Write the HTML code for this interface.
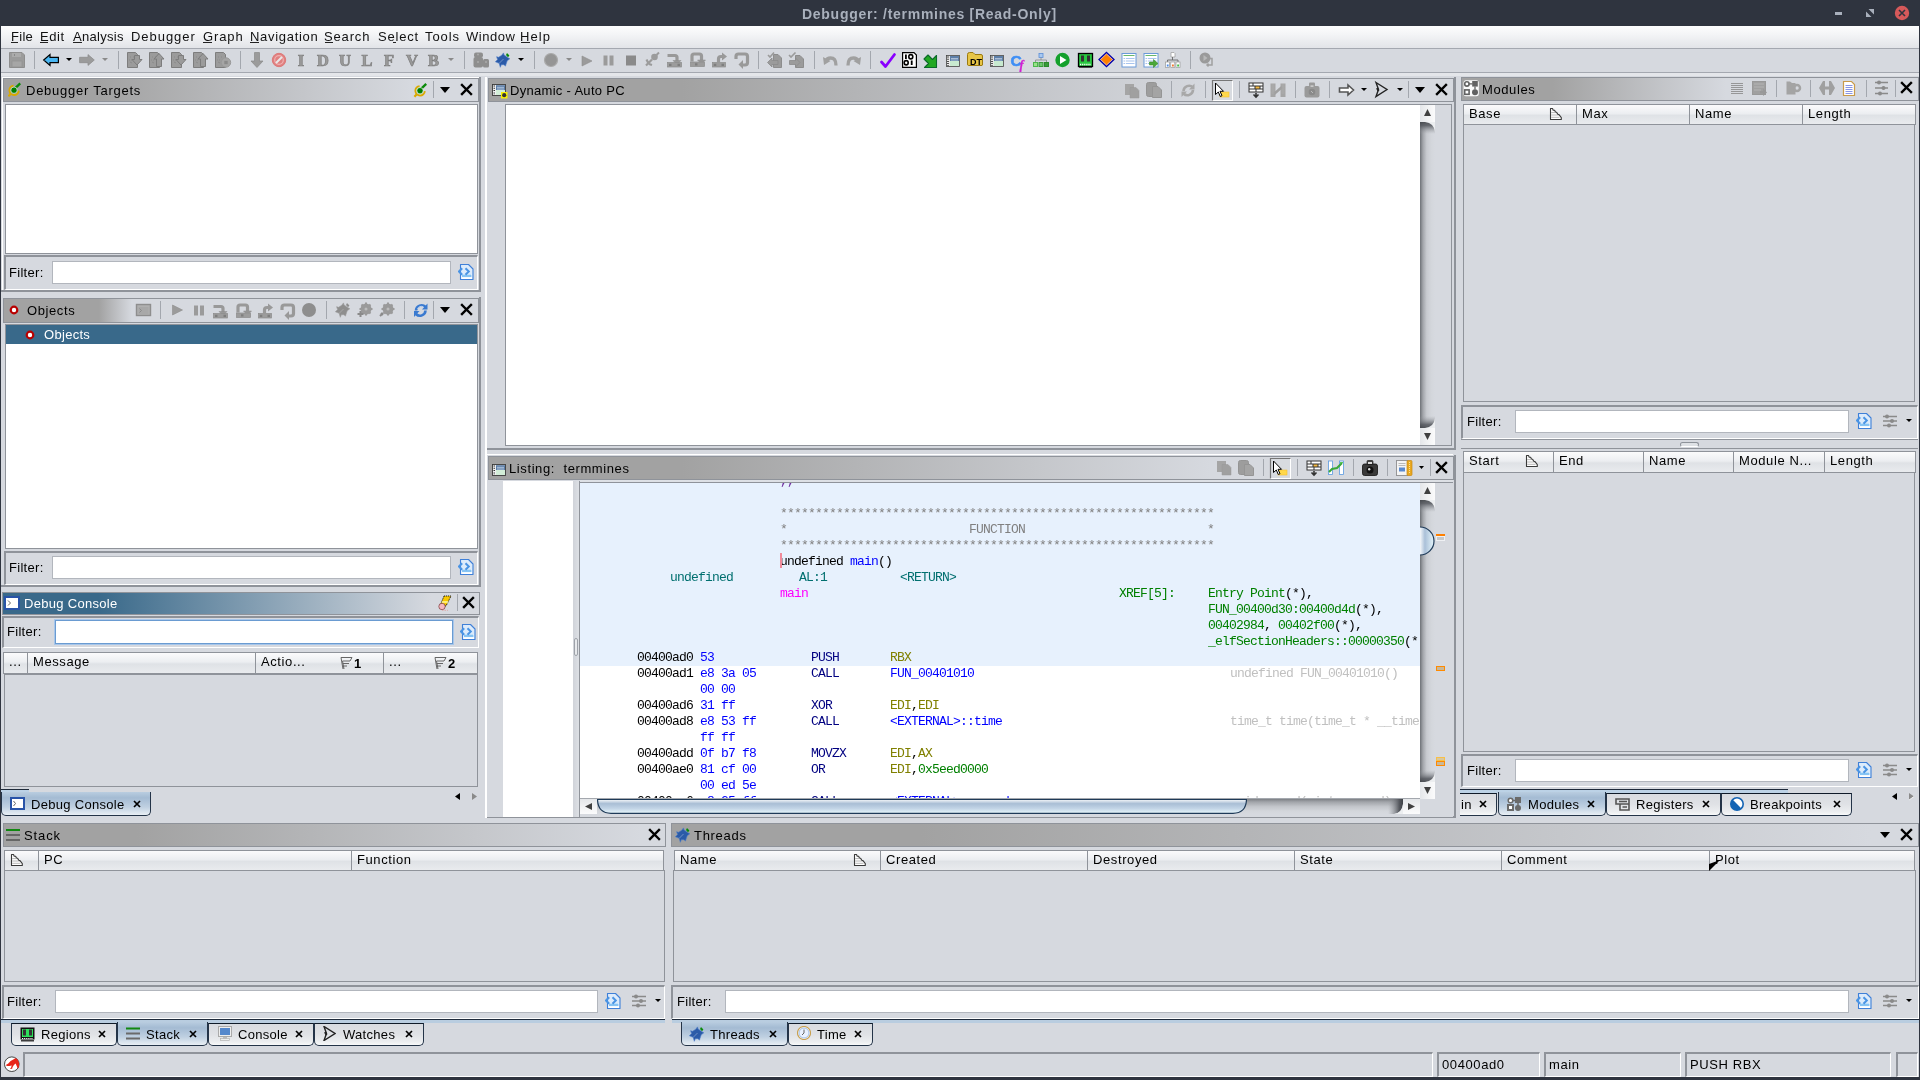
<!DOCTYPE html><html><head><meta charset="utf-8"><style>
html,body{margin:0;padding:0;}
body{width:1920px;height:1080px;overflow:hidden;position:relative;background:#d6d9df;font-family:"Liberation Sans",sans-serif;}
div,svg{position:absolute;}
.t{white-space:pre;line-height:1;will-change:transform;}
</style></head><body>
<div style="left:0px;top:0px;width:1920px;height:26px;background:#2f343f;"></div>
<div class="t" style="left:802px;top:6.65px;font-size:14px;color:#a9b0bc;letter-spacing:0.72px;font-family:'Liberation Sans', sans-serif;font-weight:bold;">Debugger: /termmines [Read-Only]</div>
<div style="left:1835px;top:12px;width:7px;height:3px;background:#a9b0bc;"></div>
<svg style="left:1866px;top:9px;" width="8" height="8" viewBox="0 0 8 8"><path d="M0 8V2.5L5.5 8Z M8 0V5.5L2.5 0Z" fill="#a9b0bc"/></svg>
<svg style="left:1894px;top:5px;" width="16" height="16" viewBox="0 0 16 16"><circle cx="8" cy="8" r="7.2" fill="#d6595a"/><path d="M5 5L11 11M11 5L5 11" stroke="#2f343f" stroke-width="1.6"/></svg>
<div style="left:0px;top:26px;width:1px;height:1054px;background:#2f343f;"></div>
<div style="left:1919px;top:26px;width:1px;height:1054px;background:#2f343f;"></div>
<div style="left:0px;top:1077px;width:1920px;height:3px;background:#2f343f;"></div>
<div style="left:1px;top:26px;width:1918px;height:22px;background:linear-gradient(to bottom,#fdfdfd 0%,#f3f4f6 40%,#e2e4e8 100%);"></div>
<div style="left:1px;top:48px;width:1918px;height:1px;background:#a4a8b0;"></div>
<div class="t" style="left:11px;top:29.70px;font-size:13px;color:#111;letter-spacing:0.3px;font-family:'Liberation Sans', sans-serif;">File</div>
<div class="t" style="left:40px;top:29.70px;font-size:13px;color:#111;letter-spacing:0.6px;font-family:'Liberation Sans', sans-serif;">Edit</div>
<div class="t" style="left:73px;top:29.70px;font-size:13px;color:#111;letter-spacing:0.3px;font-family:'Liberation Sans', sans-serif;">Analysis</div>
<div class="t" style="left:131px;top:29.70px;font-size:13px;color:#111;letter-spacing:0.95px;font-family:'Liberation Sans', sans-serif;">Debugger</div>
<div class="t" style="left:203px;top:29.70px;font-size:13px;color:#111;letter-spacing:0.9px;font-family:'Liberation Sans', sans-serif;">Graph</div>
<div class="t" style="left:249.5px;top:29.70px;font-size:13px;color:#111;letter-spacing:0.7px;font-family:'Liberation Sans', sans-serif;">Navigation</div>
<div class="t" style="left:324px;top:29.70px;font-size:13px;color:#111;letter-spacing:0.85px;font-family:'Liberation Sans', sans-serif;">Search</div>
<div class="t" style="left:377.5px;top:29.70px;font-size:13px;color:#111;letter-spacing:0.8px;font-family:'Liberation Sans', sans-serif;">Select</div>
<div class="t" style="left:425px;top:29.70px;font-size:13px;color:#111;letter-spacing:0.9px;font-family:'Liberation Sans', sans-serif;">Tools</div>
<div class="t" style="left:466px;top:29.70px;font-size:13px;color:#111;letter-spacing:0.55px;font-family:'Liberation Sans', sans-serif;">Window</div>
<div class="t" style="left:520px;top:29.70px;font-size:13px;color:#111;letter-spacing:1.1px;font-family:'Liberation Sans', sans-serif;">Help</div>
<div style="left:11px;top:42px;width:7px;height:1px;background:#222;"></div>
<div style="left:40px;top:42px;width:8px;height:1px;background:#222;"></div>
<div style="left:73px;top:42px;width:9px;height:1px;background:#222;"></div>
<div style="left:203px;top:42px;width:9px;height:1px;background:#222;"></div>
<div style="left:250px;top:42px;width:9px;height:1px;background:#222;"></div>
<div style="left:325px;top:42px;width:8px;height:1px;background:#222;"></div>
<div style="left:393px;top:42px;width:3px;height:1px;background:#222;"></div>
<div style="left:521px;top:42px;width:9px;height:1px;background:#222;"></div>
<div style="left:1px;top:72px;width:1918px;height:1px;background:#a4a8b0;"></div>
<div style="left:1px;top:73px;width:1918px;height:3px;background:#e4e6ea;"></div>
<svg style="left:0px;top:48px" width="1300" height="24" viewBox="0 0 1300 24"><g transform="translate(9,4)"><path d="M0.5 0.5H13L15.5 3V15.5H0.5Z" fill="#9b9b9b" stroke="#8e8e8e"/><rect x="3" y="1" width="9" height="4" fill="#ababab"/><rect x="5" y="2" width="1" height="2" fill="#888"/><rect x="3" y="9" width="10" height="6" fill="#a6a6a6" stroke="#8e8e8e" stroke-width="0.6"/></g><rect x="34" y="3" width="1" height="18" fill="#a3a7ae"/><g transform="translate(43,6)"><path d="M0.7 6L7 0.6V3.3H15.4V8.7H7V11.4Z" fill="#4ab6f2" stroke="#000" stroke-width="1.2" stroke-linejoin="miter"/></g><path d="M66 10H72L69 13Z" fill="#000"/><g transform="translate(79,6)"><path d="M15.3 6L9 0.6V3.3H0.6V8.7H9V11.4Z" fill="#9b9b9b" stroke="#8e8e8e" stroke-width="0.8"/></g><path d="M102 10H108L105 13Z" fill="#8a8a8a"/><rect x="118" y="3" width="1" height="18" fill="#a3a7ae"/><g transform="translate(127,4)"><path d="M0.5 0.5H8.5L10.5 2.5V15.5H0.5Z" fill="#9b9b9b" stroke="#7d7d7d"/><path d="M3 5H4M6 5H7M2 8H3M4 8H5M3 10L5 11" stroke="#888" stroke-width="0.8"/><path d="M7.5 3.5H12.5V7.5H15L10 13L5 7.5H7.5Z" fill="#9b9b9b" stroke="#7d7d7d"/></g><g transform="translate(149,4)"><path d="M0.5 0.5H8.5L10.5 2.5V15.5H0.5Z" fill="#9b9b9b" stroke="#7d7d7d"/><path d="M3 5H4M6 5H7M2 8H3M4 8H5M3 10L5 11" stroke="#888" stroke-width="0.8"/><path d="M10 1.5L15 7H12.5V14.5H7.5V7H5Z" fill="#9b9b9b" stroke="#7d7d7d"/></g><g transform="translate(171,4)"><path d="M0.5 0.5H8.5L10.5 2.5V15.5H0.5Z" fill="#9b9b9b" stroke="#7d7d7d"/><path d="M3 5H4M6 5H7M2 8H3M4 8H5M3 10L5 11" stroke="#888" stroke-width="0.8"/><path d="M7.5 3.5H12.5V7.5H15L10 13L5 7.5H7.5Z" fill="#9b9b9b" stroke="#7d7d7d"/></g><g transform="translate(193,4)"><path d="M0.5 0.5H8.5L10.5 2.5V15.5H0.5Z" fill="#9b9b9b" stroke="#7d7d7d"/><path d="M3 5H4M6 5H7M2 8H3M4 8H5M3 10L5 11" stroke="#888" stroke-width="0.8"/><path d="M10 1.5L15 7H12.5V14.5H7.5V7H5Z" fill="#9b9b9b" stroke="#7d7d7d"/></g><g transform="translate(215,4)"><path d="M0.5 0.5H8.5L10.5 2.5V15.5H0.5Z" fill="#9b9b9b" stroke="#7d7d7d"/><path d="M3 5H4M6 5H7M2 8H3M4 8H5M3 10L5 11" stroke="#888" stroke-width="0.8"/><circle cx="11" cy="10.5" r="4.7" fill="#a5a5a5" stroke="#999"/><rect x="9.3" y="8.8" width="3.4" height="3.4" fill="#8a8a8a"/></g><rect x="240" y="3" width="1" height="18" fill="#a3a7ae"/><g transform="translate(251,4)"><path d="M3.5 0.5H8.5V9H12L6 15.5L0 9H3.5Z" fill="#9b9b9b" stroke="#8a8a8a" stroke-width="0.7"/></g><g transform="translate(272,5)"><circle cx="7" cy="7" r="6.7" fill="#e08080" stroke="#d77"/><circle cx="7" cy="7" r="4.3" fill="none" stroke="#f0b0b0" stroke-width="1.2"/><path d="M4 10L10 4" stroke="#e8e8e8" stroke-width="2"/></g><g transform="translate(295,4)"><text x="6.0" y="13.8" text-anchor="middle" font-family="Liberation Serif" font-weight="bold" font-size="16.5" fill="#9a9a9a" stroke="#7f7f7f" stroke-width="0.7">I</text></g><g transform="translate(315,4)"><text x="8.0" y="13.8" text-anchor="middle" font-family="Liberation Serif" font-weight="bold" font-size="16.5" fill="#9a9a9a" stroke="#7f7f7f" stroke-width="0.7">D</text></g><g transform="translate(337,4)"><text x="8.0" y="13.8" text-anchor="middle" font-family="Liberation Serif" font-weight="bold" font-size="16.5" fill="#9a9a9a" stroke="#7f7f7f" stroke-width="0.7">U</text></g><g transform="translate(361,4)"><text x="6.0" y="13.8" text-anchor="middle" font-family="Liberation Serif" font-weight="bold" font-size="16.5" fill="#9a9a9a" stroke="#7f7f7f" stroke-width="0.7">L</text></g><g transform="translate(383,4)"><text x="6.0" y="13.8" text-anchor="middle" font-family="Liberation Serif" font-weight="bold" font-size="16.5" fill="#9a9a9a" stroke="#7f7f7f" stroke-width="0.7">F</text></g><g transform="translate(404,4)"><text x="8.0" y="13.8" text-anchor="middle" font-family="Liberation Serif" font-weight="bold" font-size="16.5" fill="#9a9a9a" stroke="#7f7f7f" stroke-width="0.7">V</text></g><g transform="translate(426,4)"><text x="7.5" y="13.8" text-anchor="middle" font-family="Liberation Serif" font-weight="bold" font-size="16.5" fill="#9a9a9a" stroke="#7f7f7f" stroke-width="0.7">B</text></g><path d="M448 10H454L451 13Z" fill="#8a8a8a"/><rect x="464" y="3" width="1" height="18" fill="#a3a7ae"/><g transform="translate(473,4)"><rect x="1" y="0.5" width="9" height="5" rx="2" fill="#8e8e8e"/><rect x="0.5" y="5" width="9.5" height="10.5" rx="2" fill="#8e8e8e"/><rect x="10" y="7" width="6" height="8.5" rx="1.5" fill="#8e8e8e"/><circle cx="5" cy="2.5" r="1" fill="#aaa"/><circle cx="5" cy="10" r="1" fill="#aaa"/><circle cx="13" cy="10" r="1" fill="#aaa"/></g><g transform="translate(495,4)"><path d="M1.6 4.7L3.6 5.3L6.7 3.3L8.5 0.9L8.9 2.7L12.2 5.3L14.8 6.8L12.2 8.8L11 12.3L10.5 14.1L8.9 12.7L6.3 12.7L5.3 15.3L4.2 11.3L0.4 9.8L2.6 7.6Z" fill="#2b5ba8" stroke="#4a7ac8" stroke-width="0.6" stroke-linejoin="round"/><path d="M4.5 11L8.5 7" stroke="#d8e4f4" stroke-width="0.7" stroke-dasharray="0.8 0.8"/><path d="M12 1.1L14.4 3.5L13 5.3L11 2.9Z" fill="#0a8a0a"/></g><path d="M518 10H524L521 13Z" fill="#000"/><rect x="534" y="3" width="1" height="18" fill="#a3a7ae"/><g transform="translate(544,5)"><circle cx="7" cy="7" r="6.5" fill="#959595" stroke="#aaa" stroke-width="1.2"/></g><path d="M566 10H572L569 13Z" fill="#8a8a8a"/><g transform="translate(582,6)"><path d="M0 2L10 7L0 12Z" fill="#9b9b9b" stroke="#8d8d8d" stroke-width="0.6"/></g><g transform="translate(603,7)"><rect x="0.5" y="0.5" width="4" height="10" fill="#9b9b9b"/><rect x="6.5" y="0.5" width="4" height="10" fill="#9b9b9b"/></g><g transform="translate(625.5,7)"><rect x="0.5" y="0.5" width="10" height="10" fill="#8a8a8a"/></g><g transform="translate(645,4)"><circle cx="9.5" cy="5" r="3.3" fill="#9b9b9b"/><path d="M11.5 3L14 0.5" stroke="#9b9b9b" stroke-width="2"/><path d="M7 7.5L1 13.5M3 10.5L1.5 7.5M4 12L7 13" stroke="#9b9b9b" stroke-width="2.2"/></g><g transform="translate(667,5)"><path d="M0.5 2.5H8Q10 2.5 10 4.5V8" stroke="#999" stroke-width="3.2" fill="none"/><path d="M6 7.5H14L10 11.5Z" fill="#999" stroke="#8a8a8a" stroke-width="0.5"/><rect x="0.5" y="9.5" width="14" height="4.5" fill="#9c9c9c" stroke="#8c8c8c" stroke-width="0.7"/><rect x="2" y="10.8" width="2.5" height="2.2" fill="#7e7e7e"/><rect x="10.5" y="10.8" width="2.5" height="2.2" fill="#7e7e7e"/></g><g transform="translate(690,4.5)"><path d="M2 9V3.5Q2 1.5 4 1.5H9.5Q11.5 1.5 11.5 3.5V8" stroke="#999" stroke-width="3.2" fill="none"/><path d="M7.5 7.5H15.5L11.5 11.5Z" fill="#999" stroke="#8a8a8a" stroke-width="0.5"/><rect x="0.5" y="9.5" width="14" height="4.5" fill="#9c9c9c" stroke="#8c8c8c" stroke-width="0.7"/><rect x="5" y="10.8" width="2.5" height="2.2" fill="#7e7e7e"/></g><g transform="translate(712,5)"><rect x="0.5" y="9.5" width="13" height="4.5" fill="#9c9c9c" stroke="#8c8c8c" stroke-width="0.7"/><path d="M6.5 10V6Q6.5 3.5 9 3.5H10.5" stroke="#999" stroke-width="3.2" fill="none"/><path d="M10 -0.5L15 3.5L10 7.5Z" fill="#999"/><rect x="1.8" y="10.8" width="2.5" height="2.2" fill="#7e7e7e"/><rect x="9.5" y="10.8" width="2.5" height="2.2" fill="#7e7e7e"/></g><g transform="translate(735,5)"><path d="M7.5 12H10Q12.5 12 12.5 9.5V3.5Q12.5 1 10 1H3.5Q1 1 1 3.5V6" stroke="#999" stroke-width="3.2" fill="none"/><path d="M3.5 11.5L8 7V16Z" fill="#999"/></g><rect x="758" y="3" width="1" height="18" fill="#a3a7ae"/><g transform="translate(767,4)"><path d="M6.5 2.5H11L14.5 6V15.5H6.5Z" fill="#9b9b9b" stroke="#8d8d8d"/><path d="M1 3L3 5L7 0.5" stroke="#9b9b9b" stroke-width="1.6" fill="none"/><path d="M0.5 10.5L5 6V8.5H11V12.5H5V15Z" fill="#9b9b9b" stroke="#8a8a8a" stroke-width="0.8"/></g><g transform="translate(789,4)"><path d="M6.5 3.5H11L14.5 7V15.5H6.5Z" fill="#9b9b9b" stroke="#8d8d8d"/><path d="M0 3L2 5L6.5 0.5" stroke="#9b9b9b" stroke-width="1.6" fill="none"/><path d="M11 10.5L6.5 6V8.5H0.5V12.5H6.5V15Z" fill="#9b9b9b" stroke="#8a8a8a" stroke-width="0.8"/></g><rect x="814" y="3" width="1" height="18" fill="#a3a7ae"/><g transform="translate(823,5)"><path d="M13 12.5Q13 5 7.5 5Q4 5 3 8" stroke="#a0a0a0" stroke-width="3.3" fill="none"/><path d="M0 4L1 12L7.5 8Z" fill="#a0a0a0"/></g><g transform="translate(845,5)"><path d="M3 12.5Q3 5 8.5 5Q12 5 13 8" stroke="#a0a0a0" stroke-width="3.3" fill="none"/><path d="M16 4L15 12L8.5 8Z" fill="#a0a0a0"/></g><rect x="870" y="3" width="1" height="18" fill="#a3a7ae"/><g transform="translate(880,5)"><path d="M1.5 9L5.5 13.5L14.5 1.5" stroke="#8a00ff" stroke-width="2.8" fill="none" stroke-linecap="round" stroke-linejoin="round"/></g><g transform="translate(902,4)"><path d="M0.6 0.6H12L14.4 3V15.4H0.6Z" fill="#fff" stroke="#000" stroke-width="1.2"/><rect x="3" y="2.5" width="1.8" height="4.5" fill="#000"/><ellipse cx="8.8" cy="4.75" rx="2" ry="2.1" fill="none" stroke="#000" stroke-width="1.6"/><ellipse cx="4.2" cy="10.75" rx="2" ry="2.1" fill="none" stroke="#000" stroke-width="1.6"/><rect x="8.8" y="8.5" width="1.8" height="4.5" fill="#000"/></g><g transform="translate(923,5)"><path d="M1 6L5 2L9.5 6.5L13.5 2.5V14.5H1.5L5.5 10.5Z" fill="#22a822" stroke="#0b6a2a" stroke-width="1.1" stroke-linejoin="round"/></g><g transform="translate(946,6)"><rect x="0.5" y="1.5" width="13" height="11" fill="#e8e8e8" stroke="#444" stroke-width="0.8"/><rect x="4" y="2" width="9" height="5" fill="#5d7fa8"/><rect x="4" y="7" width="9" height="5" fill="#c8ead0"/><path d="M2 2.5V12" stroke="#000" stroke-width="1.3" stroke-dasharray="1 1.2"/><path d="M5 4.5H12M5 6H12" stroke="#dfe8f5" stroke-width="0.6"/></g><g transform="translate(967,4)"><path d="M0.5 2.5Q0.5 0.5 2.5 0.5H6L8 2.5H14Q15.5 2.5 15.5 4V13Q15.5 13.5 14 13.5H1.5Q0.5 13.5 0.5 12Z" fill="#e7c547" stroke="#9b7a10"/><text x="3" y="12.5" font-family="Liberation Sans" font-weight="bold" font-size="9" fill="#000">DT</text></g><g transform="translate(990,6)"><rect x="0.5" y="1.5" width="13" height="11" fill="#e8e8e8" stroke="#444" stroke-width="0.8"/><rect x="4" y="2" width="9" height="5" fill="#5d7fa8"/><rect x="4" y="7" width="9" height="5" fill="#c8ead0"/><path d="M2 2.5V12" stroke="#000" stroke-width="1.3" stroke-dasharray="1 1.2"/><path d="M5 4.5H12M5 6H12" stroke="#dfe8f5" stroke-width="0.6"/></g><g transform="translate(1011,5)"><text x="-0.5" y="12.5" font-family="Liberation Sans" font-weight="bold" font-size="15.5" fill="#3f8ff5" stroke="#3f8ff5" stroke-width="0.6">C</text><text x="8.5" y="15.5" font-family="Liberation Serif" font-style="italic" font-weight="bold" font-size="12" fill="#d21fd2" stroke="#d21fd2" stroke-width="0.3">f</text></g><g transform="translate(1033,5)"><rect x="6" y="0.5" width="4" height="4" fill="#a8c8f0" stroke="#5b8ed8" stroke-width="0.8"/><path d="M2.5 9V7H13.5V9M8 4.5V7" stroke="#888" stroke-width="0.8" fill="none"/><rect x="0.5" y="9.5" width="4" height="4" fill="#9ae08a" stroke="#4bb84b"/><rect x="6" y="9.5" width="4" height="4" fill="#6cc86c" stroke="#3a9a3a"/><rect x="11.5" y="9.5" width="4" height="4" fill="#3a9a3a" stroke="#2b8a2b"/></g><g transform="translate(1055,4.5)"><circle cx="7.5" cy="7.5" r="7.2" fill="#14a02c"/><path d="M5 3.5L11.5 7.5L5 11.5Z" fill="#fff"/></g><g transform="translate(1078,5)"><rect x="0.5" y="0.5" width="14" height="13" fill="#28c840" stroke="#000" stroke-width="1.3"/><rect x="3" y="2.5" width="3" height="6" fill="#333"/><rect x="9" y="2.5" width="3" height="6" fill="#333"/><path d="M2 11.5H13" stroke="#fff" stroke-width="1.3" stroke-dasharray="1.2 0.9"/><path d="M1 14H14" stroke="#000" stroke-width="1.2"/></g><g transform="translate(1099,4)"><path d="M7.5 0.5L15 7.5L7.5 14.5L0 7.5Z" fill="#ff8000" stroke="#0000b0" stroke-width="1.3"/><path d="M7.5 2L13.5 7.5L7.5 13L1.5 7.5Z" fill="none" stroke="#c8c8ff" stroke-width="0.7"/></g><g transform="translate(1121.5,5)"><rect x="0.5" y="0.5" width="14" height="13.5" fill="#fff" stroke="#6a9ad8"/><path d="M2 2.5H13" stroke="#6ab86a" stroke-width="1"/><path d="M2 5.5H13M2 8H13M2 10.5H13" stroke="#a8c4ee" stroke-width="1.2"/><path d="M4 4.5V12.5" stroke="#fff" stroke-width="0.8"/></g><g transform="translate(1143.5,5)"><rect x="0.5" y="0.5" width="14" height="13.5" fill="#fff" stroke="#6a9ad8"/><path d="M2 2.5H13" stroke="#6ab86a" stroke-width="1"/><path d="M2 5.5H13M2 8H13M2 10.5H13" stroke="#a8c4ee" stroke-width="1.2"/><path d="M4 4.5V12.5" stroke="#fff" stroke-width="0.8"/><path d="M6 9H10V6.5L14.5 10.5L10 14.5V12H6Z" fill="#4aa83a" stroke="#3a8a2a" stroke-width="0.6"/></g><g transform="translate(1165,4)"><path d="M6 0.5H9L10 1.5V5H6Z" fill="#fff" stroke="#999" stroke-width="0.7"/><path d="M2.5 10V8H13V10M7.5 5V8" stroke="#666" stroke-width="0.9" fill="none"/><rect x="0.5" y="10" width="4" height="5.5" fill="#fff" stroke="#999" stroke-width="0.7"/><rect x="5.8" y="10" width="4" height="5.5" fill="#fff" stroke="#999" stroke-width="0.7"/><rect x="11" y="10" width="4" height="5.5" fill="#fff" stroke="#999" stroke-width="0.7"/><rect x="1.8" y="12.5" width="1.8" height="2" fill="#4a8ae8"/><rect x="7" y="12.5" width="1.8" height="2" fill="#f07830"/><rect x="12.2" y="12.5" width="1.8" height="2" fill="#40c040"/></g><rect x="1190" y="3" width="1" height="18" fill="#a3a7ae"/><g transform="translate(1199,4)"><circle cx="6" cy="6" r="5.5" fill="#9a9a9a"/><path d="M4.5 3L8.5 6L4.5 9Z" fill="#b8b8b8"/><path d="M11 6.5H13V13H8M9.5 11.5L8 13L9.5 14.5" stroke="#a0a0a0" stroke-width="1.5" fill="none"/></g></svg>
<div style="left:2px;top:77px;width:478px;height:214px;box-sizing:border-box;border-left:1px solid #fff;border-top:1px solid #fff;"></div>
<div style="left:3px;top:78px;width:476px;height:24px;box-sizing:border-box;border:1px solid #8f939a;background:linear-gradient(to right,#a2a2a2 0px,#a2a2a2 95px,#d6d9df 407px,#d6d9df 100%);"></div>
<div class="t" style="left:25.5px;top:83.70px;font-size:13px;color:#000;letter-spacing:0.75px;font-family:'Liberation Sans', sans-serif;">Debugger Targets</div>
<svg style="left:8px;top:82px;" width="16" height="16" viewBox="0 0 16 16"><path d="M5.6 3.6A4.7 4.7 0 1 0 10.8 8.6" fill="none" stroke="#d9a900" stroke-width="1.9"/><path d="M0.4 14.3L2.8 11.8" stroke="#d9a900" stroke-width="2.2"/><path d="M6.8 6.6L12.2 1.4" stroke="#0a8a0a" stroke-width="2.3"/><circle cx="6" cy="8.2" r="3.2" fill="#008000" stroke="#f4f4f4" stroke-width="0.7"/></svg>
<div style="left:5px;top:104px;width:473px;height:150px;box-sizing:border-box;border:1px solid #8f939a;background:#fff;"></div>
<div style="left:4px;top:255px;width:474px;height:35px;box-sizing:border-box;border-top:2px solid #8f939a;border-left:2px solid #8f939a;border-bottom:1px solid #fff;border-right:1px solid #fff;background:#d6d9df;"></div>
<div class="t" style="left:9px;top:265.50px;font-size:13px;color:#000;letter-spacing:0.3px;font-family:'Liberation Sans', sans-serif;">Filter:</div>
<div style="left:52px;top:261px;width:399px;height:23px;box-sizing:border-box;border:1px solid #b2b6bd;background:#fff;"></div>
<svg style="left:458px;top:264px;" width="16" height="17" viewBox="0 0 16 17"><path d="M2.5 0.5H10.5L15 5V15.5H2.5Z" fill="#dcebfb" stroke="#3f80d8" stroke-width="1.1" stroke-linejoin="round"/><rect x="3.5" y="10" width="10.5" height="5" fill="#fff"/><rect x="4" y="10.5" width="9.5" height="2.6" fill="#86c4f4"/><path d="M4.2 4.2L1 7.5L4.2 10.8M7.5 4.2L10.8 7.5L7.5 10.8" stroke="#4a94e4" stroke-width="2" fill="none"/></svg>
<div style="left:1px;top:290px;width:480px;height:2px;background:#8f939a;"></div>
<div style="left:479px;top:77px;width:2px;height:214px;background:#8f939a;"></div>
<div style="left:3px;top:298px;width:476px;height:25px;box-sizing:border-box;border:1px solid #8f939a;background:linear-gradient(to right,#a2a2a2 0px,#a2a2a2 95px,#d6d9df 128px,#d6d9df 100%);"></div>
<div class="t" style="left:26.5px;top:303.70px;font-size:13px;color:#000;letter-spacing:0.6px;font-family:'Liberation Sans', sans-serif;">Objects</div>
<svg style="left:8px;top:304px;" width="12" height="12" viewBox="0 0 12 12"><circle cx="6" cy="6" r="3.3" fill="#fff" stroke="#b80000" stroke-width="2.2"/></svg>
<div style="left:5px;top:324px;width:473px;height:225px;box-sizing:border-box;border:1px solid #8f939a;background:#fff;"></div>
<div style="left:6px;top:325px;width:471px;height:19px;background:#39698a;"></div>
<svg style="left:24px;top:329px;" width="12" height="12" viewBox="0 0 12 12"><circle cx="6" cy="6" r="3.3" fill="#fff" stroke="#b80000" stroke-width="2.2"/></svg>
<div class="t" style="left:44px;top:328.00px;font-size:13px;color:#fff;letter-spacing:0.3px;font-family:'Liberation Sans', sans-serif;">Objects</div>
<div style="left:4px;top:551px;width:474px;height:34px;box-sizing:border-box;border-top:2px solid #8f939a;border-left:2px solid #8f939a;border-bottom:1px solid #fff;border-right:1px solid #fff;background:#d6d9df;"></div>
<div class="t" style="left:9px;top:561.00px;font-size:13px;color:#000;letter-spacing:0.3px;font-family:'Liberation Sans', sans-serif;">Filter:</div>
<div style="left:52px;top:556px;width:399px;height:23px;box-sizing:border-box;border:1px solid #b2b6bd;background:#fff;"></div>
<svg style="left:458px;top:559px;" width="16" height="17" viewBox="0 0 16 17"><path d="M2.5 0.5H10.5L15 5V15.5H2.5Z" fill="#dcebfb" stroke="#3f80d8" stroke-width="1.1" stroke-linejoin="round"/><rect x="3.5" y="10" width="10.5" height="5" fill="#fff"/><rect x="4" y="10.5" width="9.5" height="2.6" fill="#86c4f4"/><path d="M4.2 4.2L1 7.5L4.2 10.8M7.5 4.2L10.8 7.5L7.5 10.8" stroke="#4a94e4" stroke-width="2" fill="none"/></svg>
<div style="left:1px;top:585px;width:480px;height:2px;background:#8f939a;"></div>
<div style="left:479px;top:297px;width:2px;height:289px;background:#8f939a;"></div>
<div style="left:487px;top:454px;width:966px;height:1px;background:#fff;"></div>
<div style="left:2px;top:592px;width:478px;height:23px;box-sizing:border-box;border:1px solid #8f939a;background:linear-gradient(to right,#39698a 0px,#39698a 95px,#d6d9df 428px,#d6d9df 100%);"></div>
<div class="t" style="left:24px;top:597.20px;font-size:13px;color:#fff;letter-spacing:0.3px;font-family:'Liberation Sans', sans-serif;">Debug Console</div>
<svg style="left:4px;top:596px;" width="16" height="14" viewBox="0 0 16 14"><rect x="1" y="1" width="14" height="12" fill="#fff" stroke="#2853a8" stroke-width="2"/><path d="M4 4.5L6.5 7L4 9.5" stroke="#666" fill="none"/></svg>
<div style="left:2px;top:616px;width:477px;height:32px;box-sizing:border-box;border-top:2px solid #8f939a;border-left:2px solid #8f939a;border-bottom:1px solid #fff;border-right:1px solid #fff;background:#d6d9df;"></div>
<div class="t" style="left:7px;top:625.00px;font-size:13px;color:#000;letter-spacing:0.3px;font-family:'Liberation Sans', sans-serif;">Filter:</div>
<div style="left:55px;top:620px;width:398px;height:24px;box-sizing:border-box;border:1px solid #6a9bd1;box-shadow:0 0 0 1px #a7c6ea;background:#fff;"></div>
<svg style="left:460px;top:624px;" width="16" height="17" viewBox="0 0 16 17"><path d="M2.5 0.5H10.5L15 5V15.5H2.5Z" fill="#dcebfb" stroke="#3f80d8" stroke-width="1.1" stroke-linejoin="round"/><rect x="3.5" y="10" width="10.5" height="5" fill="#fff"/><rect x="4" y="10.5" width="9.5" height="2.6" fill="#86c4f4"/><path d="M4.2 4.2L1 7.5L4.2 10.8M7.5 4.2L10.8 7.5L7.5 10.8" stroke="#4a94e4" stroke-width="2" fill="none"/></svg>
<div style="left:3px;top:652px;width:475px;height:22px;box-sizing:border-box;border:1px solid #8f939a;background:linear-gradient(to bottom,#fbfbfc 0%,#eceef1 45%,#dfe2e6 55%,#e9ebee 100%);"></div>
<div class="t" style="left:8.5px;top:655.30px;font-size:13px;color:#000;letter-spacing:0.6px;font-family:'Liberation Sans', sans-serif;">...</div>
<div style="left:27px;top:653px;width:1px;height:20px;background:#8f939a;"></div>
<div class="t" style="left:32.5px;top:655.30px;font-size:13px;color:#000;letter-spacing:0.6px;font-family:'Liberation Sans', sans-serif;">Message</div>
<div style="left:255px;top:653px;width:1px;height:20px;background:#8f939a;"></div>
<div class="t" style="left:260.5px;top:655.30px;font-size:13px;color:#000;letter-spacing:0.6px;font-family:'Liberation Sans', sans-serif;">Actio...</div>
<div style="left:383px;top:653px;width:1px;height:20px;background:#8f939a;"></div>
<div class="t" style="left:388.5px;top:655.30px;font-size:13px;color:#000;letter-spacing:0.6px;font-family:'Liberation Sans', sans-serif;">...</div>
<svg style="left:340px;top:656px;" width="13" height="14" viewBox="0 0 13 14"><path d="M1 1.5H12L10 5H2.5M2.5 5L4 13M2.5 7.5H9M3 10H7M1 1.5L3 13" stroke="#666" stroke-width="1" fill="none"/></svg>
<div class="t" style="left:354px;top:657.00px;font-size:13px;color:#000;letter-spacing:0.3px;font-family:'Liberation Sans', sans-serif;font-weight:bold;">1</div>
<svg style="left:434px;top:656px;" width="13" height="14" viewBox="0 0 13 14"><path d="M1 1.5H12L10 5H2.5M2.5 5L4 13M2.5 7.5H9M3 10H7M1 1.5L3 13" stroke="#666" stroke-width="1" fill="none"/></svg>
<div class="t" style="left:448px;top:657.00px;font-size:13px;color:#000;letter-spacing:0.3px;font-family:'Liberation Sans', sans-serif;font-weight:bold;">2</div>
<div style="left:4px;top:674px;width:474px;height:113px;box-sizing:border-box;border:1px solid #8f939a;background:#d6d9df;"></div>
<div style="left:1px;top:789px;width:28px;height:2px;background:#1f2a3a;"></div>
<div style="left:486px;top:77px;width:970px;height:373px;box-sizing:border-box;border-right:2px solid #8f939a;border-bottom:2px solid #8f939a;"></div>
<div style="left:488px;top:78px;width:966px;height:24px;box-sizing:border-box;border:1px solid #8f939a;background:linear-gradient(to right,#a2a2a2 0px,#a2a2a2 193px,#d6d9df 722px,#d6d9df 100%);"></div>
<div class="t" style="left:510px;top:83.70px;font-size:13px;color:#000;letter-spacing:0.3px;font-family:'Liberation Sans', sans-serif;">Dynamic - Auto PC</div>
<svg style="left:492px;top:83px;" width="16" height="16" viewBox="0 0 16 16"><rect x="0.5" y="1.5" width="13" height="11" fill="#f0f0f0" stroke="#3a3a3a" stroke-width="0.9"/><rect x="4" y="2.2" width="9" height="4.8" fill="#5a7ca6"/><rect x="4" y="7" width="9" height="5" fill="#d2eed8"/><path d="M2.2 2.5V12" stroke="#000" stroke-width="1.2" stroke-dasharray="1 1.3"/><path d="M5 4.3H12M5 6H12" stroke="#d8e6f6" stroke-width="0.7"/><rect x="9" y="9" width="6.5" height="6.5" fill="#f8f000"/><circle cx="12.2" cy="12.2" r="2.1" fill="#333"/></svg>
<div style="left:487px;top:104px;width:965px;height:342px;background:#d6d9df;"></div>
<div style="left:505px;top:104px;width:947px;height:342px;box-sizing:border-box;border-left:1px solid #8f939a;border-top:1px solid #8f939a;border-right:1px solid #8f939a;border-bottom:1px solid #8f939a;background:#d6d9df;"></div>
<div style="left:506px;top:105px;width:914px;height:340px;background:#fff;"></div>
<div style="left:486px;top:455px;width:970px;height:363px;box-sizing:border-box;border-right:2px solid #8f939a;border-bottom:2px solid #8f939a;"></div>
<div style="left:488px;top:456px;width:966px;height:24px;box-sizing:border-box;border:1px solid #8f939a;background:linear-gradient(to right,#a2a2a2 0px,#a2a2a2 193px,#d6d9df 722px,#d6d9df 100%);"></div>
<div class="t" style="left:509px;top:461.70px;font-size:13px;color:#000;letter-spacing:0.6px;font-family:'Liberation Sans', sans-serif;">Listing:  termmines</div>
<svg style="left:492px;top:462.5px;" width="16" height="16" viewBox="0 0 16 16"><rect x="0.5" y="1.5" width="13" height="11" fill="#f0f0f0" stroke="#3a3a3a" stroke-width="0.9"/><rect x="4" y="2.2" width="9" height="4.8" fill="#5a7ca6"/><rect x="4" y="7" width="9" height="5" fill="#d2eed8"/><path d="M2.2 2.5V12" stroke="#000" stroke-width="1.2" stroke-dasharray="1 1.3"/><path d="M5 4.3H12M5 6H12" stroke="#d8e6f6" stroke-width="0.7"/></svg>
<div style="left:487px;top:481px;width:966px;height:336px;background:#d6d9df;"></div>
<div style="left:503px;top:481px;width:70px;height:336px;background:#fff;"></div>
<div style="left:485px;top:77px;width:2px;height:741px;background:#fff;"></div>
<div style="left:573px;top:481px;width:6px;height:336px;background:linear-gradient(to right,#d0d3d9,#dde0e5);"></div>
<div style="left:579px;top:481px;width:1px;height:336px;background:#8f939a;"></div>
<div style="left:574px;top:638px;width:4px;height:18px;box-sizing:border-box;border:1px solid #9ea2a9;border-radius:2px;background:#e8eaed;"></div>
<div style="left:580px;top:480px;width:873px;height:3px;background:#dde0e5;"></div>
<div style="left:579px;top:482px;width:874px;height:1px;background:#8f939a;"></div>
<div style="left:580px;top:483px;width:840px;height:315px;background:#fff;"></div>
<div style="left:580px;top:483px;width:840px;height:183px;background:#e7f1fd;"></div>
<div style="left:580px;top:483px;width:840px;height:315px;overflow:hidden;"><div class="t" style="left:200px;top:-7.96px;font-family:'Liberation Mono', monospace;font-size:13px;letter-spacing:-0.800px;"><span style="color:#7030a0">,,</span></div><div class="t" style="left:200px;top:24.04px;font-family:'Liberation Mono', monospace;font-size:13px;letter-spacing:-0.800px;"><span style="color:#808080">**************************************************************</span></div><div class="t" style="left:200px;top:40.04px;font-family:'Liberation Mono', monospace;font-size:13px;letter-spacing:-0.800px;"><span style="color:#808080">*                          FUNCTION                          *</span></div><div class="t" style="left:200px;top:56.04px;font-family:'Liberation Mono', monospace;font-size:13px;letter-spacing:-0.800px;"><span style="color:#808080">**************************************************************</span></div><div class="t" style="left:200px;top:72.04px;font-family:'Liberation Mono', monospace;font-size:13px;letter-spacing:-0.800px;"><span style="color:#000">undefined </span><span style="color:#0000ff">main</span><span style="color:#000">()</span></div><div style="left:200px;top:70px;width:2px;height:15px;background:#f08a9a;"></div><div class="t" style="left:90px;top:88.04px;font-family:'Liberation Mono', monospace;font-size:13px;letter-spacing:-0.800px;"><span style="color:#006f6f">undefined</span></div><div class="t" style="left:218.5px;top:88.04px;font-family:'Liberation Mono', monospace;font-size:13px;letter-spacing:-0.800px;"><span style="color:#006f6f">AL:1</span></div><div class="t" style="left:320px;top:88.04px;font-family:'Liberation Mono', monospace;font-size:13px;letter-spacing:-0.800px;"><span style="color:#006f6f">&lt;RETURN&gt;</span></div><div class="t" style="left:200px;top:104.04px;font-family:'Liberation Mono', monospace;font-size:13px;letter-spacing:-0.800px;"><span style="color:#ff00ff">main</span></div><div class="t" style="left:538.5px;top:104.04px;font-family:'Liberation Mono', monospace;font-size:13px;letter-spacing:-0.800px;"><span style="color:#008000">XREF[5]:</span></div><div class="t" style="left:628px;top:104.04px;font-family:'Liberation Mono', monospace;font-size:13px;letter-spacing:-0.800px;"><span style="color:#008000">Entry Point</span><span style="color:#000">(*),</span></div><div class="t" style="left:628px;top:120.04px;font-family:'Liberation Mono', monospace;font-size:13px;letter-spacing:-0.800px;"><span style="color:#008000">FUN_00400d30:00400d4d</span><span style="color:#000">(*),</span></div><div class="t" style="left:628px;top:136.04px;font-family:'Liberation Mono', monospace;font-size:13px;letter-spacing:-0.800px;"><span style="color:#008000">00402984</span><span style="color:#000">, </span><span style="color:#008000">00402f00</span><span style="color:#000">(*),</span></div><div class="t" style="left:628px;top:152.04px;font-family:'Liberation Mono', monospace;font-size:13px;letter-spacing:-0.800px;"><span style="color:#008000">_elfSectionHeaders::00000350</span><span style="color:#000">(*</span></div><div class="t" style="left:57px;top:168.04px;font-family:'Liberation Mono', monospace;font-size:13px;letter-spacing:-0.800px;"><span style="color:#000">00400ad0</span></div><div class="t" style="left:120px;top:168.04px;font-family:'Liberation Mono', monospace;font-size:13px;letter-spacing:-0.800px;"><span style="color:#0000ff">53</span></div><div class="t" style="left:230.5px;top:168.04px;font-family:'Liberation Mono', monospace;font-size:13px;letter-spacing:-0.800px;"><span style="color:#000080">PUSH</span></div><div class="t" style="left:310px;top:168.04px;font-family:'Liberation Mono', monospace;font-size:13px;letter-spacing:-0.800px;"><span style="color:#808000">RBX</span></div><div class="t" style="left:57px;top:184.04px;font-family:'Liberation Mono', monospace;font-size:13px;letter-spacing:-0.800px;"><span style="color:#000">00400ad1</span></div><div class="t" style="left:120px;top:184.04px;font-family:'Liberation Mono', monospace;font-size:13px;letter-spacing:-0.800px;"><span style="color:#0000ff">e8 3a 05</span></div><div class="t" style="left:230.5px;top:184.04px;font-family:'Liberation Mono', monospace;font-size:13px;letter-spacing:-0.800px;"><span style="color:#000080">CALL</span></div><div class="t" style="left:310px;top:184.04px;font-family:'Liberation Mono', monospace;font-size:13px;letter-spacing:-0.800px;"><span style="color:#0000ff">FUN_00401010</span></div><div class="t" style="left:650px;top:184.04px;font-family:'Liberation Mono', monospace;font-size:13px;letter-spacing:-0.800px;"><span style="color:#c0c0c0">undefined FUN_00401010()</span></div><div class="t" style="left:120px;top:200.04px;font-family:'Liberation Mono', monospace;font-size:13px;letter-spacing:-0.800px;"><span style="color:#0000ff">00 00</span></div><div class="t" style="left:57px;top:216.04px;font-family:'Liberation Mono', monospace;font-size:13px;letter-spacing:-0.800px;"><span style="color:#000">00400ad6</span></div><div class="t" style="left:120px;top:216.04px;font-family:'Liberation Mono', monospace;font-size:13px;letter-spacing:-0.800px;"><span style="color:#0000ff">31 ff</span></div><div class="t" style="left:230.5px;top:216.04px;font-family:'Liberation Mono', monospace;font-size:13px;letter-spacing:-0.800px;"><span style="color:#000080">XOR</span></div><div class="t" style="left:310px;top:216.04px;font-family:'Liberation Mono', monospace;font-size:13px;letter-spacing:-0.800px;"><span style="color:#808000">EDI</span><span style="color:#000">,</span><span style="color:#808000">EDI</span></div><div class="t" style="left:57px;top:232.04px;font-family:'Liberation Mono', monospace;font-size:13px;letter-spacing:-0.800px;"><span style="color:#000">00400ad8</span></div><div class="t" style="left:120px;top:232.04px;font-family:'Liberation Mono', monospace;font-size:13px;letter-spacing:-0.800px;"><span style="color:#0000ff">e8 53 ff</span></div><div class="t" style="left:230.5px;top:232.04px;font-family:'Liberation Mono', monospace;font-size:13px;letter-spacing:-0.800px;"><span style="color:#000080">CALL</span></div><div class="t" style="left:310px;top:232.04px;font-family:'Liberation Mono', monospace;font-size:13px;letter-spacing:-0.800px;"><span style="color:#0000ff">&lt;EXTERNAL&gt;::time</span></div><div class="t" style="left:650px;top:232.04px;font-family:'Liberation Mono', monospace;font-size:13px;letter-spacing:-0.800px;"><span style="color:#c0c0c0">time_t time(time_t * __time</span></div><div class="t" style="left:120px;top:248.04px;font-family:'Liberation Mono', monospace;font-size:13px;letter-spacing:-0.800px;"><span style="color:#0000ff">ff ff</span></div><div class="t" style="left:57px;top:264.04px;font-family:'Liberation Mono', monospace;font-size:13px;letter-spacing:-0.800px;"><span style="color:#000">00400add</span></div><div class="t" style="left:120px;top:264.04px;font-family:'Liberation Mono', monospace;font-size:13px;letter-spacing:-0.800px;"><span style="color:#0000ff">0f b7 f8</span></div><div class="t" style="left:230.5px;top:264.04px;font-family:'Liberation Mono', monospace;font-size:13px;letter-spacing:-0.800px;"><span style="color:#000080">MOVZX</span></div><div class="t" style="left:310px;top:264.04px;font-family:'Liberation Mono', monospace;font-size:13px;letter-spacing:-0.800px;"><span style="color:#808000">EDI</span><span style="color:#000">,</span><span style="color:#808000">AX</span></div><div class="t" style="left:57px;top:280.04px;font-family:'Liberation Mono', monospace;font-size:13px;letter-spacing:-0.800px;"><span style="color:#000">00400ae0</span></div><div class="t" style="left:120px;top:280.04px;font-family:'Liberation Mono', monospace;font-size:13px;letter-spacing:-0.800px;"><span style="color:#0000ff">81 cf 00</span></div><div class="t" style="left:230.5px;top:280.04px;font-family:'Liberation Mono', monospace;font-size:13px;letter-spacing:-0.800px;"><span style="color:#000080">OR</span></div><div class="t" style="left:310px;top:280.04px;font-family:'Liberation Mono', monospace;font-size:13px;letter-spacing:-0.800px;"><span style="color:#808000">EDI</span><span style="color:#000">,</span><span style="color:#008000">0x5eed0000</span></div><div class="t" style="left:120px;top:296.04px;font-family:'Liberation Mono', monospace;font-size:13px;letter-spacing:-0.800px;"><span style="color:#0000ff">00 ed 5e</span></div><div class="t" style="left:57px;top:312.04px;font-family:'Liberation Mono', monospace;font-size:13px;letter-spacing:-0.800px;"><span style="color:#000">00400ae6</span></div><div class="t" style="left:120px;top:312.04px;font-family:'Liberation Mono', monospace;font-size:13px;letter-spacing:-0.800px;"><span style="color:#0000ff">e8 25 ff</span></div><div class="t" style="left:230.5px;top:312.04px;font-family:'Liberation Mono', monospace;font-size:13px;letter-spacing:-0.800px;"><span style="color:#000080">CALL</span></div><div class="t" style="left:310px;top:312.04px;font-family:'Liberation Mono', monospace;font-size:13px;letter-spacing:-0.800px;"><span style="color:#0000ff">&lt;EXTERNAL&gt;::srand</span></div><div class="t" style="left:650px;top:312.04px;font-family:'Liberation Mono', monospace;font-size:13px;letter-spacing:-0.800px;"><span style="color:#c0c0c0">void srand(uint __seed)</span></div></div>
<div style="left:1461px;top:77px;width:458px;height:24px;box-sizing:border-box;border:1px solid #8f939a;background:linear-gradient(to right,#a2a2a2 0px,#a2a2a2 91px,#d6d9df 264px,#d6d9df 100%);"></div>
<div class="t" style="left:1482px;top:82.70px;font-size:13px;color:#000;letter-spacing:0.6px;font-family:'Liberation Sans', sans-serif;">Modules</div>
<svg style="left:1463px;top:80px;" width="16" height="17" viewBox="0 0 16 17"><rect x="0.5" y="0.3" width="15.3" height="15.9" rx="2.5" fill="#fafafa"/><circle cx="3.9" cy="3.9" r="2.2" fill="#fff" stroke="#626262" stroke-width="1.6"/><path d="M5.8 3.9H9.5M12 6.5V9.5" stroke="#626262" stroke-width="1.3"/><rect x="9.2" y="1" width="5.6" height="5.6" fill="#626262"/><rect x="1.7" y="9.9" width="4.4" height="4.4" fill="#fff" stroke="#626262" stroke-width="1.6"/><circle cx="12" cy="12.2" r="3" fill="#626262"/></svg>
<div style="left:1463px;top:104px;width:453px;height:21px;box-sizing:border-box;border:1px solid #8f939a;background:linear-gradient(to bottom,#fbfbfc 0%,#eceef1 45%,#dfe2e6 55%,#e9ebee 100%);"></div>
<div class="t" style="left:1468.5px;top:107.30px;font-size:13px;color:#000;letter-spacing:0.6px;font-family:'Liberation Sans', sans-serif;">Base</div>
<div style="left:1576px;top:105px;width:1px;height:19px;background:#8f939a;"></div>
<div class="t" style="left:1581.5px;top:107.30px;font-size:13px;color:#000;letter-spacing:0.6px;font-family:'Liberation Sans', sans-serif;">Max</div>
<div style="left:1689px;top:105px;width:1px;height:19px;background:#8f939a;"></div>
<div class="t" style="left:1694.5px;top:107.30px;font-size:13px;color:#000;letter-spacing:0.6px;font-family:'Liberation Sans', sans-serif;">Name</div>
<div style="left:1802px;top:105px;width:1px;height:19px;background:#8f939a;"></div>
<div class="t" style="left:1807.5px;top:107.30px;font-size:13px;color:#000;letter-spacing:0.6px;font-family:'Liberation Sans', sans-serif;">Length</div>
<svg style="left:1549px;top:107px;" width="14" height="14" viewBox="0 0 14 14"><path d="M1.5 1.5H3.5L4.2 3.2H5.6L6.6 5.2H7.6L9 7.6H10L12.3 10.6V12.5H1.5Z" fill="#fff" stroke="#3a3a3a" stroke-width="1.1" stroke-linejoin="round"/><path d="M2.2 5.6H6.5M2.2 8H8.5M2.2 10.3H10.5" stroke="#b8b8b8" stroke-width="1"/></svg>
<div style="left:1463px;top:124px;width:452px;height:278px;box-sizing:border-box;border:1px solid #8f939a;background:#d6d9df;"></div>
<div style="left:1461px;top:405px;width:457px;height:34px;box-sizing:border-box;border-top:2px solid #8f939a;border-left:2px solid #8f939a;border-bottom:1px solid #fff;border-right:1px solid #fff;background:#d6d9df;"></div>
<div class="t" style="left:1467px;top:415.00px;font-size:13px;color:#000;letter-spacing:0.3px;font-family:'Liberation Sans', sans-serif;">Filter:</div>
<div style="left:1515px;top:410px;width:334px;height:23px;box-sizing:border-box;border:1px solid #b2b6bd;background:#fff;"></div>
<svg style="left:1856px;top:413px;" width="16" height="17" viewBox="0 0 16 17"><path d="M2.5 0.5H10.5L15 5V15.5H2.5Z" fill="#dcebfb" stroke="#3f80d8" stroke-width="1.1" stroke-linejoin="round"/><rect x="3.5" y="10" width="10.5" height="5" fill="#fff"/><rect x="4" y="10.5" width="9.5" height="2.6" fill="#86c4f4"/><path d="M4.2 4.2L1 7.5L4.2 10.8M7.5 4.2L10.8 7.5L7.5 10.8" stroke="#4a94e4" stroke-width="2" fill="none"/></svg>
<svg style="left:1883px;top:414px;" width="14" height="14" viewBox="0 0 14 14"><path d="M0 2.5H14M0 7H14M0 11.5H14" stroke="#8a8a8a" stroke-width="1.5"/><circle cx="4" cy="2.5" r="2" fill="#8a8a8a"/><circle cx="9" cy="7" r="2" fill="#8a8a8a"/><circle cx="6" cy="11.5" r="2" fill="#8a8a8a"/></svg>
<svg style="left:1906px;top:419px;" width="6" height="4" viewBox="0 0 6 4"><path d="M0 0H6L3 3Z" fill="#000"/></svg>
<div style="left:1461px;top:439px;width:457px;height:1px;background:#8f939a;"></div>
<div style="left:1461px;top:448px;width:457px;height:1px;background:#8f939a;"></div>
<div style="left:1680px;top:442px;width:19px;height:5px;box-sizing:border-box;border:1px solid #8e939a;border-bottom:1px solid #fff;border-radius:3px;background:#dfe2e6;"></div>
<div style="left:1463px;top:451px;width:453px;height:22px;box-sizing:border-box;border:1px solid #8f939a;background:linear-gradient(to bottom,#fbfbfc 0%,#eceef1 45%,#dfe2e6 55%,#e9ebee 100%);"></div>
<div class="t" style="left:1468.5px;top:454.30px;font-size:13px;color:#000;letter-spacing:0.6px;font-family:'Liberation Sans', sans-serif;">Start</div>
<div style="left:1553px;top:452px;width:1px;height:20px;background:#8f939a;"></div>
<div class="t" style="left:1558.5px;top:454.30px;font-size:13px;color:#000;letter-spacing:0.6px;font-family:'Liberation Sans', sans-serif;">End</div>
<div style="left:1643px;top:452px;width:1px;height:20px;background:#8f939a;"></div>
<div class="t" style="left:1648.5px;top:454.30px;font-size:13px;color:#000;letter-spacing:0.6px;font-family:'Liberation Sans', sans-serif;">Name</div>
<div style="left:1733px;top:452px;width:1px;height:20px;background:#8f939a;"></div>
<div class="t" style="left:1738.5px;top:454.30px;font-size:13px;color:#000;letter-spacing:0.6px;font-family:'Liberation Sans', sans-serif;">Module N...</div>
<div style="left:1824px;top:452px;width:1px;height:20px;background:#8f939a;"></div>
<div class="t" style="left:1829.5px;top:454.30px;font-size:13px;color:#000;letter-spacing:0.6px;font-family:'Liberation Sans', sans-serif;">Length</div>
<svg style="left:1525px;top:454px;" width="14" height="14" viewBox="0 0 14 14"><path d="M1.5 1.5H3.5L4.2 3.2H5.6L6.6 5.2H7.6L9 7.6H10L12.3 10.6V12.5H1.5Z" fill="#fff" stroke="#3a3a3a" stroke-width="1.1" stroke-linejoin="round"/><path d="M2.2 5.6H6.5M2.2 8H8.5M2.2 10.3H10.5" stroke="#b8b8b8" stroke-width="1"/></svg>
<div style="left:1463px;top:472px;width:452px;height:280px;box-sizing:border-box;border:1px solid #8f939a;background:#d6d9df;"></div>
<div style="left:1461px;top:754px;width:457px;height:33px;box-sizing:border-box;border-top:2px solid #8f939a;border-left:2px solid #8f939a;border-bottom:1px solid #fff;border-right:1px solid #fff;background:#d6d9df;"></div>
<div class="t" style="left:1467px;top:763.50px;font-size:13px;color:#000;letter-spacing:0.3px;font-family:'Liberation Sans', sans-serif;">Filter:</div>
<div style="left:1515px;top:759px;width:334px;height:23px;box-sizing:border-box;border:1px solid #b2b6bd;background:#fff;"></div>
<svg style="left:1856px;top:762px;" width="16" height="17" viewBox="0 0 16 17"><path d="M2.5 0.5H10.5L15 5V15.5H2.5Z" fill="#dcebfb" stroke="#3f80d8" stroke-width="1.1" stroke-linejoin="round"/><rect x="3.5" y="10" width="10.5" height="5" fill="#fff"/><rect x="4" y="10.5" width="9.5" height="2.6" fill="#86c4f4"/><path d="M4.2 4.2L1 7.5L4.2 10.8M7.5 4.2L10.8 7.5L7.5 10.8" stroke="#4a94e4" stroke-width="2" fill="none"/></svg>
<svg style="left:1883px;top:763px;" width="14" height="14" viewBox="0 0 14 14"><path d="M0 2.5H14M0 7H14M0 11.5H14" stroke="#8a8a8a" stroke-width="1.5"/><circle cx="4" cy="2.5" r="2" fill="#8a8a8a"/><circle cx="9" cy="7" r="2" fill="#8a8a8a"/><circle cx="6" cy="11.5" r="2" fill="#8a8a8a"/></svg>
<svg style="left:1906px;top:768px;" width="6" height="4" viewBox="0 0 6 4"><path d="M0 0H6L3 3Z" fill="#000"/></svg>
<div style="left:1460px;top:789px;width:328px;height:2px;background:#1f2a3a;"></div>
<div style="left:3px;top:823px;width:663px;height:24px;box-sizing:border-box;border:1px solid #8f939a;background:linear-gradient(to right,#a2a2a2 0px,#a2a2a2 132px,#d6d9df 637px,#d6d9df 100%);"></div>
<div class="t" style="left:23.5px;top:828.70px;font-size:13px;color:#000;letter-spacing:0.9px;font-family:'Liberation Sans', sans-serif;">Stack</div>
<svg style="left:5px;top:828px;" width="16" height="14" viewBox="0 0 16 14"><path d="M1 2H15" stroke="#118811" stroke-width="2"/><path d="M1 7H15M1 12H15" stroke="#666" stroke-width="2"/></svg>
<div style="left:4px;top:850px;width:660px;height:21px;box-sizing:border-box;border:1px solid #8f939a;background:linear-gradient(to bottom,#fbfbfc 0%,#eceef1 45%,#dfe2e6 55%,#e9ebee 100%);"></div>
<div class="t" style="left:9.5px;top:853.30px;font-size:13px;color:#000;letter-spacing:0.6px;font-family:'Liberation Sans', sans-serif;"></div>
<div style="left:38px;top:851px;width:1px;height:19px;background:#8f939a;"></div>
<div class="t" style="left:43.5px;top:853.30px;font-size:13px;color:#000;letter-spacing:0.6px;font-family:'Liberation Sans', sans-serif;">PC</div>
<div style="left:351px;top:851px;width:1px;height:19px;background:#8f939a;"></div>
<div class="t" style="left:356.5px;top:853.30px;font-size:13px;color:#000;letter-spacing:0.6px;font-family:'Liberation Sans', sans-serif;">Function</div>
<svg style="left:10px;top:853px;" width="14" height="14" viewBox="0 0 14 14"><path d="M1.5 1.5H3.5L4.2 3.2H5.6L6.6 5.2H7.6L9 7.6H10L12.3 10.6V12.5H1.5Z" fill="#fff" stroke="#3a3a3a" stroke-width="1.1" stroke-linejoin="round"/><path d="M2.2 5.6H6.5M2.2 8H8.5M2.2 10.3H10.5" stroke="#b8b8b8" stroke-width="1"/></svg>
<div style="left:4px;top:870px;width:661px;height:112px;box-sizing:border-box;border:1px solid #8f939a;background:#d6d9df;"></div>
<div style="left:2px;top:985px;width:663px;height:34px;box-sizing:border-box;border-top:2px solid #8f939a;border-left:2px solid #8f939a;border-bottom:1px solid #fff;border-right:1px solid #fff;background:#d6d9df;"></div>
<div class="t" style="left:7px;top:995.00px;font-size:13px;color:#000;letter-spacing:0.3px;font-family:'Liberation Sans', sans-serif;">Filter:</div>
<div style="left:55px;top:990px;width:543px;height:23px;box-sizing:border-box;border:1px solid #b2b6bd;background:#fff;"></div>
<svg style="left:605px;top:993px;" width="16" height="17" viewBox="0 0 16 17"><path d="M2.5 0.5H10.5L15 5V15.5H2.5Z" fill="#dcebfb" stroke="#3f80d8" stroke-width="1.1" stroke-linejoin="round"/><rect x="3.5" y="10" width="10.5" height="5" fill="#fff"/><rect x="4" y="10.5" width="9.5" height="2.6" fill="#86c4f4"/><path d="M4.2 4.2L1 7.5L4.2 10.8M7.5 4.2L10.8 7.5L7.5 10.8" stroke="#4a94e4" stroke-width="2" fill="none"/></svg>
<svg style="left:632px;top:994px;" width="14" height="14" viewBox="0 0 14 14"><path d="M0 2.5H14M0 7H14M0 11.5H14" stroke="#8a8a8a" stroke-width="1.5"/><circle cx="4" cy="2.5" r="2" fill="#8a8a8a"/><circle cx="9" cy="7" r="2" fill="#8a8a8a"/><circle cx="6" cy="11.5" r="2" fill="#8a8a8a"/></svg>
<svg style="left:655px;top:999px;" width="6" height="4" viewBox="0 0 6 4"><path d="M0 0H6L3 3Z" fill="#000"/></svg>
<div style="left:671px;top:823px;width:1248px;height:24px;box-sizing:border-box;border:1px solid #8f939a;background:linear-gradient(to right,#a2a2a2 0px,#a2a2a2 249px,#d6d9df 1199px,#d6d9df 100%);"></div>
<div class="t" style="left:693.5px;top:828.70px;font-size:13px;color:#000;letter-spacing:0.7px;font-family:'Liberation Sans', sans-serif;">Threads</div>
<svg style="left:674.5px;top:827px;" width="16" height="16" viewBox="0 0 16 16"><path d="M1.6 4.7L3.6 5.3L6.7 3.3L8.5 0.9L8.9 2.7L12.2 5.3L14.8 6.8L12.2 8.8L11 12.3L10.5 14.1L8.9 12.7L6.3 12.7L5.3 15.3L4.2 11.3L0.4 9.8L2.6 7.6Z" fill="#2b5ba8" stroke="#4a7ac8" stroke-width="0.6" stroke-linejoin="round"/><path d="M4.5 11L8.5 7" stroke="#d8e4f4" stroke-width="0.7" stroke-dasharray="0.8 0.8"/><path d="M12 1.1L14.4 3.5L13 5.3L11 2.9Z" fill="#0a8a0a"/></svg>
<div style="left:674px;top:850px;width:1241px;height:21px;box-sizing:border-box;border:1px solid #8f939a;background:linear-gradient(to bottom,#fbfbfc 0%,#eceef1 45%,#dfe2e6 55%,#e9ebee 100%);"></div>
<div class="t" style="left:679.5px;top:853.30px;font-size:13px;color:#000;letter-spacing:0.6px;font-family:'Liberation Sans', sans-serif;">Name</div>
<div style="left:880px;top:851px;width:1px;height:19px;background:#8f939a;"></div>
<div class="t" style="left:885.5px;top:853.30px;font-size:13px;color:#000;letter-spacing:0.6px;font-family:'Liberation Sans', sans-serif;">Created</div>
<div style="left:1087px;top:851px;width:1px;height:19px;background:#8f939a;"></div>
<div class="t" style="left:1092.5px;top:853.30px;font-size:13px;color:#000;letter-spacing:0.6px;font-family:'Liberation Sans', sans-serif;">Destroyed</div>
<div style="left:1294px;top:851px;width:1px;height:19px;background:#8f939a;"></div>
<div class="t" style="left:1299.5px;top:853.30px;font-size:13px;color:#000;letter-spacing:0.6px;font-family:'Liberation Sans', sans-serif;">State</div>
<div style="left:1501px;top:851px;width:1px;height:19px;background:#8f939a;"></div>
<div class="t" style="left:1506.5px;top:853.30px;font-size:13px;color:#000;letter-spacing:0.6px;font-family:'Liberation Sans', sans-serif;">Comment</div>
<div style="left:1709px;top:851px;width:1px;height:19px;background:#8f939a;"></div>
<div class="t" style="left:1714.5px;top:853.30px;font-size:13px;color:#000;letter-spacing:0.6px;font-family:'Liberation Sans', sans-serif;">Plot</div>
<svg style="left:853px;top:853px;" width="14" height="14" viewBox="0 0 14 14"><path d="M1.5 1.5H3.5L4.2 3.2H5.6L6.6 5.2H7.6L9 7.6H10L12.3 10.6V12.5H1.5Z" fill="#fff" stroke="#3a3a3a" stroke-width="1.1" stroke-linejoin="round"/><path d="M2.2 5.6H6.5M2.2 8H8.5M2.2 10.3H10.5" stroke="#b8b8b8" stroke-width="1"/></svg>
<div style="left:673px;top:870px;width:1243px;height:112px;box-sizing:border-box;border:1px solid #8f939a;background:#d6d9df;"></div>
<div style="left:671px;top:985px;width:1248px;height:34px;box-sizing:border-box;border-top:2px solid #8f939a;border-left:2px solid #8f939a;border-bottom:1px solid #fff;border-right:1px solid #fff;background:#d6d9df;"></div>
<div class="t" style="left:677px;top:995.00px;font-size:13px;color:#000;letter-spacing:0.3px;font-family:'Liberation Sans', sans-serif;">Filter:</div>
<div style="left:725px;top:990px;width:1124px;height:23px;box-sizing:border-box;border:1px solid #b2b6bd;background:#fff;"></div>
<svg style="left:1856px;top:993px;" width="16" height="17" viewBox="0 0 16 17"><path d="M2.5 0.5H10.5L15 5V15.5H2.5Z" fill="#dcebfb" stroke="#3f80d8" stroke-width="1.1" stroke-linejoin="round"/><rect x="3.5" y="10" width="10.5" height="5" fill="#fff"/><rect x="4" y="10.5" width="9.5" height="2.6" fill="#86c4f4"/><path d="M4.2 4.2L1 7.5L4.2 10.8M7.5 4.2L10.8 7.5L7.5 10.8" stroke="#4a94e4" stroke-width="2" fill="none"/></svg>
<svg style="left:1883px;top:994px;" width="14" height="14" viewBox="0 0 14 14"><path d="M0 2.5H14M0 7H14M0 11.5H14" stroke="#8a8a8a" stroke-width="1.5"/><circle cx="4" cy="2.5" r="2" fill="#8a8a8a"/><circle cx="9" cy="7" r="2" fill="#8a8a8a"/><circle cx="6" cy="11.5" r="2" fill="#8a8a8a"/></svg>
<svg style="left:1906px;top:999px;" width="6" height="4" viewBox="0 0 6 4"><path d="M0 0H6L3 3Z" fill="#000"/></svg>
<div style="left:1px;top:1019px;width:664px;height:1px;background:#1f2a3a;"></div>
<div style="left:1px;top:1020px;width:664px;height:3px;background:#b9cde0;"></div>
<div style="left:672px;top:1019px;width:1247px;height:1px;background:#1f2a3a;"></div>
<div style="left:672px;top:1020px;width:1247px;height:3px;background:#b9cde0;"></div>
<svg style="left:1110px;top:78px" width="340" height="24" viewBox="0 0 340 24"><g transform="translate(15,6)"><rect x="0" y="0" width="9" height="11" fill="#a5a5a5"/><path d="M5 3.5H11L14 6.5V14H5Z" fill="#a0a0a0" stroke="#999" stroke-width="0.5"/></g><g transform="translate(36,4)"><rect x="0.5" y="0.5" width="10" height="14" rx="2" fill="#9d9d9d" stroke="#949494"/><path d="M6.5 4.5H12L15.5 8V15.5H6.5Z" fill="#a4a4a4" stroke="#959595"/></g><rect x="61" y="3" width="1" height="17" fill="#a3a7ae"/><g transform="translate(71,5)"><path d="M2.5 8A5.5 5.5 0 0 1 12 4.5" stroke="#a8a8a8" stroke-width="2.6" fill="none"/><path d="M13.5 0.5V6.5H8Z" fill="#a8a8a8"/><path d="M12 7A5.5 5.5 0 0 1 2.5 10.5" stroke="#a8a8a8" stroke-width="2.6" fill="none"/><path d="M0.5 14V8.5H6Z" fill="#a8a8a8"/></g><rect x="95" y="3" width="1" height="17" fill="#a3a7ae"/><g transform="translate(102,2)"><rect x="0.5" y="0.5" width="20" height="20" fill="#d8dbe0" stroke="#fff"/><path d="M0.5 20.5V0.5H20.5" stroke="#777" stroke-width="1.2" fill="none"/><rect x="8" y="12" width="9" height="5" fill="#ffd84a" stroke="#f5c030" stroke-width="0.6"/><path d="M3.5 3L3.5 14.5L6.3 12L8.3 16.5L10 15.7L8 11.3L11.5 11.3Z" fill="#fff" stroke="#000" stroke-width="1" stroke-linejoin="miter"/></g><rect x="129" y="3" width="1" height="17" fill="#a3a7ae"/><g transform="translate(138,4)"><rect x="0.5" y="0.5" width="15" height="10" fill="#333"/><rect x="1.5" y="1.5" width="3" height="2" fill="#fff"/><rect x="5.5" y="1.5" width="9" height="2" fill="#fff"/><rect x="1.5" y="4.5" width="5" height="2" fill="#fff"/><rect x="7.5" y="4.5" width="4" height="2" fill="#f4b840"/><rect x="12.5" y="4.5" width="2" height="2" fill="#fff"/><rect x="1.5" y="7.5" width="6" height="2" fill="#fff"/><rect x="8.5" y="7.5" width="6" height="2" fill="#fff"/><path d="M8 11V15M5.5 12.5L8 15L10.5 12.5" stroke="#333" stroke-width="1.6" fill="none"/></g><g transform="translate(160,5)"><rect x="0.5" y="0.5" width="5" height="13.5" fill="#a5a5a5"/><rect x="10.5" y="0.5" width="5" height="13.5" fill="#a5a5a5"/><path d="M4 11L12 4" stroke="#a0a0a0" stroke-width="2.5"/><path d="M1.5 2H4.5M1.5 4H4.5M1.5 6H4.5M1.5 8H4.5M1.5 10H4.5M11.5 2H14.5M11.5 4H14.5M11.5 6H14.5M11.5 8H14.5M11.5 10H14.5" stroke="#b5b5b5" stroke-width="0.5"/></g><rect x="185" y="3" width="1" height="17" fill="#a3a7ae"/><g transform="translate(194,4)"><rect x="0.5" y="4" width="15" height="11.5" rx="2" fill="#9a9a9a"/><rect x="5" y="0.5" width="6" height="4" rx="1" fill="#9a9a9a"/><rect x="6.5" y="3.5" width="3" height="1.2" fill="#ddd"/><circle cx="8" cy="10" r="3.3" fill="#8a8a8a"/><path d="M7 9L9 11" stroke="#bbb"/></g><rect x="219" y="3" width="1" height="17" fill="#a3a7ae"/><g transform="translate(229,6.5)"><path d="M0.5 3.5H9V0.5L14.5 5.5L9 10.5V7.5H0.5Z" fill="#fff" stroke="#555" stroke-width="1.6"/></g><path d="M251 10H257L254.0 13Z" fill="#000"/><g transform="translate(265,4)"><path d="M1 0.5L12 7.5L1 14.5L3.5 7.5Z" fill="none" stroke="#222" stroke-width="1.4"/><path d="M2 6L3.5 9" stroke="#222" stroke-width="2"/></g><path d="M287 10H293L290.0 13Z" fill="#000"/><rect x="298" y="3" width="1" height="17" fill="#a3a7ae"/><path d="M305 9H315L310.0 15Z" fill="#000"/><path d="M327 7L336 16M336 7L327 16" stroke="#000" stroke-width="2.4" stroke-linecap="square"/></svg>
<svg style="left:1210px;top:456px" width="240" height="24" viewBox="0 0 240 24"><g transform="translate(7,5)"><rect x="0" y="0" width="9" height="11" fill="#a5a5a5"/><path d="M5 3.5H11L14 6.5V14H5Z" fill="#a0a0a0" stroke="#999" stroke-width="0.5"/></g><g transform="translate(28,4)"><rect x="0.5" y="0.5" width="10" height="14" rx="2" fill="#9d9d9d" stroke="#949494"/><path d="M6.5 4.5H12L15.5 8V15.5H6.5Z" fill="#a4a4a4" stroke="#959595"/></g><rect x="53" y="3" width="1" height="17" fill="#a3a7ae"/><g transform="translate(60,2)"><rect x="0.5" y="0.5" width="20" height="20" fill="#d8dbe0" stroke="#fff"/><path d="M0.5 20.5V0.5H20.5" stroke="#777" stroke-width="1.2" fill="none"/><rect x="8" y="12" width="9" height="5" fill="#ffd84a" stroke="#f5c030" stroke-width="0.6"/><path d="M3.5 3L3.5 14.5L6.3 12L8.3 16.5L10 15.7L8 11.3L11.5 11.3Z" fill="#fff" stroke="#000" stroke-width="1" stroke-linejoin="miter"/></g><rect x="87" y="3" width="1" height="17" fill="#a3a7ae"/><g transform="translate(96,4)"><rect x="0.5" y="0.5" width="15" height="10" fill="#333"/><rect x="1.5" y="1.5" width="3" height="2" fill="#fff"/><rect x="5.5" y="1.5" width="9" height="2" fill="#fff"/><rect x="1.5" y="4.5" width="5" height="2" fill="#fff"/><rect x="7.5" y="4.5" width="4" height="2" fill="#f4b840"/><rect x="12.5" y="4.5" width="2" height="2" fill="#fff"/><rect x="1.5" y="7.5" width="6" height="2" fill="#fff"/><rect x="8.5" y="7.5" width="6" height="2" fill="#fff"/><path d="M8 11V15M5.5 12.5L8 15L10.5 12.5" stroke="#333" stroke-width="1.6" fill="none"/></g><g transform="translate(118,4)"><rect x="0.5" y="1" width="4" height="13.5" fill="#fff" stroke="#5a9ae0" stroke-width="0.8"/><rect x="11.5" y="1" width="4" height="13.5" fill="#fff" stroke="#5a9ae0" stroke-width="0.8"/><path d="M1 12L4 9L9 8L14 3" stroke="#3aa83a" stroke-width="2" fill="none"/><path d="M12 2.5H15" stroke="#5ac85a" stroke-width="1"/></g><rect x="143" y="3" width="1" height="17" fill="#a3a7ae"/><g transform="translate(152,4)"><rect x="0.5" y="4" width="15" height="11.5" rx="2" fill="#3a3a3a" stroke="#111" stroke-width="0.8"/><rect x="5" y="0.5" width="6" height="4" rx="1" fill="#444" stroke="#111" stroke-width="0.6"/><rect x="6" y="2" width="4" height="2" fill="#ddd"/><circle cx="8" cy="10" r="3.5" fill="#111"/><circle cx="7.2" cy="9.2" r="1.2" fill="#ddd"/></g><rect x="177" y="3" width="1" height="17" fill="#a3a7ae"/><g transform="translate(186,4)"><rect x="0.5" y="0.5" width="11" height="15" fill="#f4f4f4" stroke="#333" stroke-width="0.9" stroke-dasharray="1 1"/><path d="M2.5 3.5H9.5M2.5 5.5H9.5" stroke="#aaa" stroke-width="0.8"/><rect x="3" y="7.5" width="6" height="4" fill="#5a8ad0"/><rect x="11" y="0.5" width="5" height="15" rx="1" fill="#e8a820" stroke="#c88810" stroke-width="0.7"/><path d="M13.5 2V14" stroke="#fff2b0" stroke-dasharray="0.8 1.2"/></g><path d="M209 10H214L211.5 13Z" fill="#000"/><rect x="220" y="3" width="1" height="17" fill="#a3a7ae"/><path d="M227 7L236 16M236 7L227 16" stroke="#000" stroke-width="2.4" stroke-linecap="square"/></svg>
<svg style="left:400px;top:78px" width="80" height="24" viewBox="0 0 80 24"><g transform="translate(14,4.5)"><path d="M5.6 3.6A4.7 4.7 0 1 0 10.8 8.6" fill="none" stroke="#d9a900" stroke-width="1.9"/><path d="M0.4 14.3L2.8 11.8" stroke="#d9a900" stroke-width="2.2"/><path d="M6.8 6.6L12.2 1.4" stroke="#0a8a0a" stroke-width="2.3"/><circle cx="6" cy="8.2" r="3.2" fill="#008000" stroke="#f4f4f4" stroke-width="0.7"/></g><rect x="33" y="3" width="1" height="17" fill="#a3a7ae"/><path d="M40 9H50L45.0 15Z" fill="#000"/><path d="M62 7L71 16M71 7L62 16" stroke="#000" stroke-width="2.4" stroke-linecap="square"/></svg>
<svg style="left:130px;top:298px" width="350" height="24" viewBox="0 0 350 24"><g transform="translate(6,6)"><rect x="0.5" y="0.5" width="14" height="11" fill="#b0b0b0" stroke="#8e8e8e" stroke-width="1.4"/><rect x="2.5" y="3" width="10" height="7" fill="#a8a8a8"/><path d="M3.5 4.5L5.5 6.5L3.5 8.5" stroke="#8a8a8a" fill="none"/></g><rect x="30" y="3" width="1" height="18" fill="#a3a7ae"/><g transform="translate(42.5,5)"><path d="M0 2L10 7L0 12Z" fill="#9b9b9b" stroke="#8d8d8d" stroke-width="0.6"/></g><g transform="translate(63.5,7)"><rect x="0.5" y="0.5" width="4" height="10" fill="#9b9b9b"/><rect x="6.5" y="0.5" width="4" height="10" fill="#9b9b9b"/></g><g transform="translate(83,6)"><path d="M0.5 2.5H8Q10 2.5 10 4.5V8" stroke="#999" stroke-width="3.2" fill="none"/><path d="M6 7.5H14L10 11.5Z" fill="#999" stroke="#8a8a8a" stroke-width="0.5"/><rect x="0.5" y="9.5" width="14" height="4.5" fill="#9c9c9c" stroke="#8c8c8c" stroke-width="0.7"/><rect x="2" y="10.8" width="2.5" height="2.2" fill="#7e7e7e"/><rect x="10.5" y="10.8" width="2.5" height="2.2" fill="#7e7e7e"/></g><g transform="translate(106,5.5)"><path d="M2 9V3.5Q2 1.5 4 1.5H9.5Q11.5 1.5 11.5 3.5V8" stroke="#999" stroke-width="3.2" fill="none"/><path d="M7.5 7.5H15.5L11.5 11.5Z" fill="#999" stroke="#8a8a8a" stroke-width="0.5"/><rect x="0.5" y="9.5" width="14" height="4.5" fill="#9c9c9c" stroke="#8c8c8c" stroke-width="0.7"/><rect x="5" y="10.8" width="2.5" height="2.2" fill="#7e7e7e"/></g><g transform="translate(128,6)"><rect x="0.5" y="9.5" width="13" height="4.5" fill="#9c9c9c" stroke="#8c8c8c" stroke-width="0.7"/><path d="M6.5 10V6Q6.5 3.5 9 3.5H10.5" stroke="#999" stroke-width="3.2" fill="none"/><path d="M10 -0.5L15 3.5L10 7.5Z" fill="#999"/><rect x="1.8" y="10.8" width="2.5" height="2.2" fill="#7e7e7e"/><rect x="9.5" y="10.8" width="2.5" height="2.2" fill="#7e7e7e"/></g><g transform="translate(151,6)"><path d="M7.5 12H10Q12.5 12 12.5 9.5V3.5Q12.5 1 10 1H3.5Q1 1 1 3.5V6" stroke="#999" stroke-width="3.2" fill="none"/><path d="M3.5 11.5L8 7V16Z" fill="#999"/></g><g transform="translate(172,5)"><circle cx="7" cy="7" r="7" fill="#8e8e8e"/></g><rect x="196" y="3" width="1" height="18" fill="#a3a7ae"/><g transform="translate(205,4)"><path d="M1.6 4.7L3.6 5.3L6.7 3.3L8.5 0.9L8.9 2.7L12.2 5.3L14.8 6.8L12.2 8.8L11 12.3L10.5 14.1L8.9 12.7L6.3 12.7L5.3 15.3L4.2 11.3L0.4 9.8L2.6 7.6Z" fill="#8e8e8e" stroke="#9a9a9a" stroke-width="0.6" stroke-linejoin="round"/><path d="M4.5 11L8.5 7" stroke="#b0b0b0" stroke-width="0.7"/><path d="M12 1.1L14.4 3.5L13 5.3L11 2.9Z" fill="#8e8e8e"/></g><g transform="translate(227,4)"><circle cx="9" cy="7" r="5.5" fill="#9a9a9a"/><circle cx="9" cy="7" r="1.5" fill="#bbb"/><path d="M9 0.5V2M9 12V13.5M2.5 7H4M14 7H15.5M4.5 2.5L5.5 3.5M12.5 10.5L13.5 11.5M13.5 2.5L12.5 3.5M4.5 11.5L5.5 10.5" stroke="#9a9a9a" stroke-width="2"/><path d="M3.5 9V15M0.5 12H6.5" stroke="#8a8a8a" stroke-width="2"/></g><g transform="translate(249,4)"><circle cx="9" cy="7" r="5.5" fill="#9a9a9a"/><circle cx="9" cy="7" r="1.5" fill="#bbb"/><path d="M9 0.5V2M9 12V13.5M2.5 7H4M14 7H15.5M4.5 2.5L5.5 3.5M12.5 10.5L13.5 11.5M13.5 2.5L12.5 3.5M4.5 11.5L5.5 10.5" stroke="#9a9a9a" stroke-width="2"/><path d="M1 14L4 11M2 11L4 13" stroke="#8a8a8a" stroke-width="2"/></g><rect x="274" y="3" width="1" height="18" fill="#a3a7ae"/><g transform="translate(283.5,5)"><path d="M2.5 7.5A5.5 5.5 0 0 1 12 4" stroke="#3a7ad0" stroke-width="2.6" fill="none"/><path d="M14 0.5V6.5H8.5Z" fill="#3a7ad0"/><path d="M12 7.5A5.5 5.5 0 0 1 2.5 11" stroke="#3a7ad0" stroke-width="2.6" fill="none"/><path d="M0.5 14V8H6Z" fill="#3a7ad0"/><path d="M4 6A4 4 0 0 1 10 4" stroke="#cfe0f8" stroke-width="0.8" fill="none"/></g><rect x="303" y="3" width="1" height="18" fill="#a3a7ae"/><path d="M310 9H320L315.0 15Z" fill="#000"/><path d="M332 7L341 16M341 7L332 16" stroke="#000" stroke-width="2.4" stroke-linecap="square"/></svg>
<svg style="left:430px;top:591px" width="50" height="24" viewBox="0 0 50 24"><g transform="translate(8,4)"><path d="M6 1L13 1L8 11L2 11Z" fill="#f8c800" stroke="#111" stroke-width="0.9" stroke-dasharray="1.2 0.8"/><path d="M4 7L10 7" stroke="#fff8a0" stroke-width="1.5"/><circle cx="4" cy="11.5" r="3.2" fill="#f4b8c0" stroke="#7a3a3a" stroke-width="0.7"/><path d="M4 15.3H10" stroke="#e0a0a0" stroke-width="0.8" stroke-dasharray="1.5 1"/></g><rect x="27" y="3" width="1" height="17" fill="#a3a7ae"/><path d="M34 7L43 16M43 7L34 16" stroke="#000" stroke-width="2.4" stroke-linecap="square"/></svg>
<svg style="left:1725px;top:77px" width="195" height="24" viewBox="0 0 195 24"><g transform="translate(6,5)"><path d="M0 1.5H12M0 3.5H12M0 5.5H12M0 7.5H12M0 9.5H12M0 11.5H12" stroke="#8e8e8e" stroke-width="0.9"/></g><g transform="translate(27,4)"><rect x="0.5" y="0.5" width="13" height="13" fill="#a0a0a0" stroke="#999"/><path d="M2 3H12M2 6H12M2 9H9" stroke="#b4b4b4"/><path d="M8 10H11V7.5L15 11.5L11 15V12.5H8Z" fill="#999"/></g><rect x="51" y="3" width="1" height="17" fill="#a3a7ae"/><g transform="translate(61,4)"><path d="M0.5 0.5H4L6 2H9.5V13.5H0.5Z" fill="#a4a4a4"/><circle cx="11" cy="7" r="3" fill="none" stroke="#a4a4a4" stroke-width="2.5"/></g><rect x="85" y="3" width="1" height="17" fill="#a3a7ae"/><g transform="translate(94,3)"><path d="M0 8L4 1H6V15H4Z M16 8L12 1H10V15H12Z" fill="#a0a0a0"/><rect x="5" y="6.5" width="6" height="3" fill="#a0a0a0"/></g><g transform="translate(118,4)"><path d="M0.5 0.5H8.5L11.5 3.5V14.5H0.5Z" fill="#fff" stroke="#c89a4a" stroke-width="1.2"/><path d="M2.5 4.5H9.5M2.5 6.5H9.5M2.5 8.5H9.5M2.5 10.5H9.5M2.5 12.5H9.5" stroke="#6a7ae0" stroke-width="0.8"/></g><rect x="141" y="3" width="1" height="17" fill="#a3a7ae"/><g transform="translate(150,3)"><path d="M0 2.5H13M0 8H13M0 13.5H13" stroke="#8a8a8a" stroke-width="1.6"/><circle cx="4" cy="2.5" r="2" fill="#8a8a8a"/><circle cx="8.5" cy="8" r="2" fill="#8a8a8a"/><circle cx="5" cy="13.5" r="2" fill="#8a8a8a"/></g><rect x="170" y="3" width="1" height="17" fill="#a3a7ae"/><path d="M177 6L186 15M186 6L177 15" stroke="#000" stroke-width="2.4" stroke-linecap="square"/></svg>
<svg style="left:640px;top:824px" width="30" height="23" viewBox="0 0 30 23"><path d="M10 6L19 15M19 6L10 15" stroke="#000" stroke-width="2.4" stroke-linecap="square"/></svg>
<svg style="left:1870px;top:824px" width="50" height="23" viewBox="0 0 50 23"><path d="M10 8H20L15.0 14Z" fill="#000"/><path d="M32 6L41 15M41 6L32 15" stroke="#000" stroke-width="2.4" stroke-linecap="square"/></svg>
<div style="left:1420px;top:105px;width:15px;height:340px;background:linear-gradient(to right,#6e7277 0%,#a3a6ab 20%,#c8cbd0 45%,#d3d6db 75%,#d6d9df 100%);"></div><div style="left:1420px;top:105px;width:15px;height:17px;background:linear-gradient(to right,#e4e6e9 0%,#f3f4f5 60%,#fbfbfc 100%);"></div><svg style="left:1420px;top:122px" width="15" height="12" viewBox="0 0 15 12"><defs><linearGradient id="vc105" x1="0" x2="0" y1="1" y2="0"><stop offset="0" stop-color="#9a9da2" stop-opacity="0"/><stop offset="0.7" stop-color="#55585e"/><stop offset="1" stop-color="#3e4146"/></linearGradient></defs><path d="M0 0H15V12H0Z" fill="url(#vc105)" opacity="0.85"/><path d="M5 0Q14 1 15 10V0Z" fill="#eceef0"/></svg><svg style="left:1424px;top:109px" width="7" height="7"><path d="M3.5 0L7 7H0Z" fill="#404040"/></svg><div style="left:1420px;top:428px;width:15px;height:17px;background:linear-gradient(to right,#e4e6e9 0%,#f3f4f5 60%,#fbfbfc 100%);"></div><svg style="left:1420px;top:416px" width="15" height="12" viewBox="0 0 15 12"><defs><linearGradient id="vd105" x1="0" x2="0" y1="0" y2="1"><stop offset="0" stop-color="#9a9da2" stop-opacity="0"/><stop offset="0.7" stop-color="#55585e"/><stop offset="1" stop-color="#3e4146"/></linearGradient></defs><path d="M0 0H15V12H0Z" fill="url(#vd105)" opacity="0.85"/><path d="M5 12Q14 11 15 2V12Z" fill="#eceef0"/></svg><svg style="left:1424px;top:433px" width="7" height="7"><path d="M0 0H7L3.5 7Z" fill="#404040"/></svg><div style="left:1420px;top:483px;width:15px;height:316px;background:linear-gradient(to right,#6e7277 0%,#a3a6ab 20%,#c8cbd0 45%,#d3d6db 75%,#d6d9df 100%);"></div><div style="left:1420px;top:483px;width:15px;height:17px;background:linear-gradient(to right,#e4e6e9 0%,#f3f4f5 60%,#fbfbfc 100%);"></div><svg style="left:1420px;top:500px" width="15" height="12" viewBox="0 0 15 12"><defs><linearGradient id="vc483" x1="0" x2="0" y1="1" y2="0"><stop offset="0" stop-color="#9a9da2" stop-opacity="0"/><stop offset="0.7" stop-color="#55585e"/><stop offset="1" stop-color="#3e4146"/></linearGradient></defs><path d="M0 0H15V12H0Z" fill="url(#vc483)" opacity="0.85"/><path d="M5 0Q14 1 15 10V0Z" fill="#eceef0"/></svg><svg style="left:1424px;top:487px" width="7" height="7"><path d="M3.5 0L7 7H0Z" fill="#404040"/></svg><div style="left:1420px;top:782px;width:15px;height:17px;background:linear-gradient(to right,#e4e6e9 0%,#f3f4f5 60%,#fbfbfc 100%);"></div><svg style="left:1420px;top:770px" width="15" height="12" viewBox="0 0 15 12"><defs><linearGradient id="vd483" x1="0" x2="0" y1="0" y2="1"><stop offset="0" stop-color="#9a9da2" stop-opacity="0"/><stop offset="0.7" stop-color="#55585e"/><stop offset="1" stop-color="#3e4146"/></linearGradient></defs><path d="M0 0H15V12H0Z" fill="url(#vd483)" opacity="0.85"/><path d="M5 12Q14 11 15 2V12Z" fill="#eceef0"/></svg><svg style="left:1424px;top:787px" width="7" height="7"><path d="M0 0H7L3.5 7Z" fill="#404040"/></svg><svg style="left:1419px;top:526px" width="17" height="30" viewBox="0 0 17 30"><defs><linearGradient id="tv" x1="0" x2="1" y1="0" y2="0"><stop offset="0" stop-color="#f4f7fa"/><stop offset="0.35" stop-color="#aac0d8"/><stop offset="1" stop-color="#e6f6fb"/></linearGradient></defs><path d="M1 1A14 14 0 0 1 1 29Z" fill="url(#tv)"/><path d="M1 1A14 14 0 0 1 1 29" fill="none" stroke="#1e3a58" stroke-width="1.2"/></svg><div style="left:1420px;top:799px;width:31px;height:15px;background:#d6d9df;"></div><div style="left:580px;top:799px;width:840px;height:15px;background:linear-gradient(to bottom,#7d8085 0%,#a2a5aa 20%,#c2c5ca 50%,#d3d6db 80%,#d6d9df 100%);"></div><div style="left:580px;top:799px;width:17px;height:15px;background:linear-gradient(to bottom,#e4e6e9 0%,#f3f4f5 60%,#fbfbfc 100%);"></div><svg style="left:585px;top:803px" width="7" height="7"><path d="M0 3.5L7 0V7Z" fill="#404040"/></svg><div style="left:1403px;top:799px;width:17px;height:15px;background:linear-gradient(to bottom,#e4e6e9 0%,#f3f4f5 60%,#fbfbfc 100%);"></div><svg style="left:1388px;top:799px" width="15" height="15" viewBox="0 0 15 15"><defs><linearGradient id="hc" x1="0" x2="1" y1="0" y2="0"><stop offset="0" stop-color="#9a9da2" stop-opacity="0"/><stop offset="0.75" stop-color="#55585e"/><stop offset="1" stop-color="#3e4146"/></linearGradient></defs><path d="M0 0H15V5Q14 14 6 15H0Z" fill="url(#hc)"/><path d="M15 5Q14 14 6 15H15Z" fill="#eceef0"/></svg><svg style="left:1408px;top:803px" width="7" height="7"><path d="M0 0L7 3.5L0 7Z" fill="#404040"/></svg><svg style="left:597px;top:799px" width="650" height="15" viewBox="0 0 650 15"><defs><linearGradient id="th" x1="0" x2="0" y1="0" y2="1"><stop offset="0" stop-color="#f6f8fa"/><stop offset="0.3" stop-color="#a9bed5"/><stop offset="0.65" stop-color="#c2d4e6"/><stop offset="1" stop-color="#e8f7fb"/></linearGradient></defs><path d="M0.5 0.5Q1 14.3 14 14.3H636Q649 14.3 649.5 0.5Z" fill="url(#th)" stroke="#1e3a58" stroke-width="1.2"/></svg><div style="left:580px;top:798px;width:840px;height:1px;background:#a4a8ae;"></div><div style="left:1436px;top:534px;width:9px;height:1.5px;background:#ff8000;"></div><div style="left:1436px;top:535.5px;width:9px;height:5px;box-sizing:border-box;border:1px solid #eef0f3;background:#c8c8c8;"></div><div style="left:1436px;top:666px;width:9px;height:5px;box-sizing:border-box;border:1px solid #ff8a00;background:#c8b89a;"></div><div style="left:1436px;top:757px;width:9px;height:4px;box-sizing:border-box;border:1px solid #f8c048;background:#d8c8a0;"></div><div style="left:1436px;top:761px;width:9px;height:5px;box-sizing:border-box;border:1px solid #ff8a00;background:#c8b89a;"></div><div style="left:1px;top:790px;width:28px;height:3px;background:#bcd2e6;"></div><div style="left:1px;top:792px;width:150px;height:24px;box-sizing:border-box;border:1px solid #243448;border-top:none;border-radius:0 0 5px 5px;background:linear-gradient(to bottom,#b9cde0 0%,#a4bbd3 25%,#bfd0e1 65%,#e9eff5 100%);"></div><svg style="left:10px;top:797px" width="15" height="13" viewBox="0 0 15 13"><rect x="1" y="1" width="13" height="11" fill="#fff" stroke="#2853a8" stroke-width="2"/><path d="M3.5 4L5.5 6.5L3.5 9" stroke="#666" fill="none"/></svg><div class="t" style="left:30.5px;top:797.70px;font-size:13px;color:#000;letter-spacing:0.3px;">Debug Console</div><svg style="left:133px;top:800.0px" width="8" height="8" viewBox="0 0 8 8"><path d="M1 1L7 7M7 1L1 7" stroke="#000" stroke-width="1.7"/></svg><div style="left:1460px;top:790px;width:328px;height:3px;background:#bcd2e6;"></div><div style="left:1460px;top:785px;width:40px;height:35px;overflow:hidden;"><div style="left:-20px;top:8px;width:57px;height:23px;box-sizing:border-box;border:1px solid #243448;border-top:1px solid #0f1a28;border-radius:0 0 5px 5px;background:linear-gradient(to bottom,#d8dbe0 0%,#e0e2e6 50%,#eceef0 85%,#f8f9fa 100%);"></div><div class="t" style="left:1px;top:12.60px;font-size:13px;color:#000;letter-spacing:0.3px;">in</div><svg style="left:19px;top:14.9px" width="8" height="8" viewBox="0 0 8 8"><path d="M1 1L7 7M7 1L1 7" stroke="#000" stroke-width="1.7"/></svg></div><div style="left:1498px;top:792px;width:108px;height:24px;box-sizing:border-box;border:1px solid #243448;border-top:none;border-radius:0 0 5px 5px;background:linear-gradient(to bottom,#b9cde0 0%,#a4bbd3 25%,#bfd0e1 65%,#e9eff5 100%);"></div><svg style="left:1507px;top:797px" width="15" height="15" viewBox="0 0 15 15"><circle cx="3.5" cy="3.5" r="2.3" fill="#fff" stroke="#6a6a6a" stroke-width="1.5"/><path d="M5.5 3.5H9" stroke="#6a6a6a" stroke-width="1.5"/><rect x="8" y="0" width="6" height="6" fill="#6a6a6a"/><rect x="1" y="8" width="5" height="5" fill="#fff" stroke="#6a6a6a" stroke-width="2"/><path d="M11 5V10" stroke="#6a6a6a" stroke-width="1.5"/><circle cx="11" cy="11" r="3" fill="#6a6a6a"/></svg><div class="t" style="left:1527.5px;top:797.70px;font-size:13px;color:#000;letter-spacing:0.3px;">Modules</div><svg style="left:1587px;top:800.0px" width="8" height="8" viewBox="0 0 8 8"><path d="M1 1L7 7M7 1L1 7" stroke="#000" stroke-width="1.7"/></svg><div style="left:1606px;top:793px;width:115px;height:23px;box-sizing:border-box;border:1px solid #243448;border-top:1px solid #0f1a28;border-radius:0 0 5px 5px;background:linear-gradient(to bottom,#d8dbe0 0%,#e0e2e6 50%,#eceef0 85%,#f8f9fa 100%);"></div><svg style="left:1615px;top:798px" width="15" height="14" viewBox="0 0 15 14"><path d="M1 1H14V6H1Z M5 6V12H14V6" fill="none" stroke="#555" stroke-width="1.6"/><path d="M4 3.5H12M7.5 9H12" stroke="#555" stroke-width="1.3"/></svg><div class="t" style="left:1635.5px;top:797.70px;font-size:13px;color:#000;letter-spacing:0.3px;">Registers</div><svg style="left:1702px;top:800.0px" width="8" height="8" viewBox="0 0 8 8"><path d="M1 1L7 7M7 1L1 7" stroke="#000" stroke-width="1.7"/></svg><div style="left:1721px;top:793px;width:131px;height:23px;box-sizing:border-box;border:1px solid #243448;border-top:1px solid #0f1a28;border-radius:0 0 5px 5px;background:linear-gradient(to bottom,#d8dbe0 0%,#e0e2e6 50%,#eceef0 85%,#f8f9fa 100%);"></div><svg style="left:1730px;top:797px" width="14" height="14" viewBox="0 0 14 14"><circle cx="7" cy="7" r="6.2" fill="#fff" stroke="#1464b4" stroke-width="1.6"/><path d="M2.6 2.6A6.2 6.2 0 0 0 11.4 11.4Z" fill="#1464b4"/></svg><div class="t" style="left:1750px;top:797.70px;font-size:13px;color:#000;letter-spacing:0.3px;">Breakpoints</div><svg style="left:1833px;top:800.0px" width="8" height="8" viewBox="0 0 8 8"><path d="M1 1L7 7M7 1L1 7" stroke="#000" stroke-width="1.7"/></svg><svg style="left:1892px;top:793px" width="22" height="8"><path d="M0 3.5L5 0V7Z" fill="#000"/><path d="M17 0L22 3.5L17 7Z" fill="#8a8a8a"/><path d="M17 7L22 3.5" stroke="#fff" stroke-width="0.8"/></svg><svg style="left:455px;top:793px" width="22" height="8"><path d="M0 3.5L5 0V7Z" fill="#000"/><path d="M17 0L22 3.5L17 7Z" fill="#8a8a8a"/></svg><div style="left:11px;top:1023px;width:106px;height:23px;box-sizing:border-box;border:1px solid #243448;border-top:1px solid #0f1a28;border-radius:0 0 5px 5px;background:linear-gradient(to bottom,#d8dbe0 0%,#e0e2e6 50%,#eceef0 85%,#f8f9fa 100%);"></div><svg style="left:20px;top:1027px" width="15" height="15" viewBox="0 0 15 15"><rect x="0.5" y="0.5" width="14" height="12" fill="#111"/><rect x="2" y="2" width="11" height="8" fill="#2ee05a"/><rect x="3" y="2.5" width="3" height="6" fill="#333"/><rect x="9" y="2.5" width="3" height="6" fill="#333"/><path d="M2 11.5H13" stroke="#fff" stroke-width="1.2" stroke-dasharray="1.2 0.9"/><path d="M1 13.8H14" stroke="#111" stroke-width="1.2"/></svg><div class="t" style="left:40.5px;top:1027.60px;font-size:13px;color:#000;letter-spacing:0.3px;">Regions</div><svg style="left:98px;top:1029.9px" width="8" height="8" viewBox="0 0 8 8"><path d="M1 1L7 7M7 1L1 7" stroke="#000" stroke-width="1.7"/></svg><div style="left:117px;top:1022px;width:91px;height:24px;box-sizing:border-box;border:1px solid #243448;border-top:none;border-radius:0 0 5px 5px;background:linear-gradient(to bottom,#b9cde0 0%,#a4bbd3 25%,#bfd0e1 65%,#e9eff5 100%);"></div><svg style="left:126px;top:1027px" width="14" height="13" viewBox="0 0 14 13"><path d="M0 1.5H14" stroke="#118811" stroke-width="2"/><path d="M0 6.5H14M0 11.5H14" stroke="#6a6a6a" stroke-width="2"/></svg><div class="t" style="left:146px;top:1027.60px;font-size:13px;color:#000;letter-spacing:0.3px;">Stack</div><svg style="left:189px;top:1029.9px" width="8" height="8" viewBox="0 0 8 8"><path d="M1 1L7 7M7 1L1 7" stroke="#000" stroke-width="1.7"/></svg><div style="left:208px;top:1023px;width:106px;height:23px;box-sizing:border-box;border:1px solid #243448;border-top:1px solid #0f1a28;border-radius:0 0 5px 5px;background:linear-gradient(to bottom,#d8dbe0 0%,#e0e2e6 50%,#eceef0 85%,#f8f9fa 100%);"></div><svg style="left:217.5px;top:1026px" width="14" height="15" viewBox="0 0 14 15"><rect x="0.5" y="0.5" width="13" height="10" fill="#eee" stroke="#aaa"/><rect x="2" y="2" width="10" height="7" fill="#5588cc"/><rect x="5" y="11" width="4" height="2" fill="#bbb"/><rect x="2.5" y="12.5" width="9" height="2" fill="#eee" stroke="#aaa" stroke-width="0.6"/></svg><div class="t" style="left:238px;top:1027.60px;font-size:13px;color:#000;letter-spacing:0.3px;">Console</div><svg style="left:295px;top:1029.9px" width="8" height="8" viewBox="0 0 8 8"><path d="M1 1L7 7M7 1L1 7" stroke="#000" stroke-width="1.7"/></svg><div style="left:314px;top:1023px;width:110px;height:23px;box-sizing:border-box;border:1px solid #243448;border-top:1px solid #0f1a28;border-radius:0 0 5px 5px;background:linear-gradient(to bottom,#d8dbe0 0%,#e0e2e6 50%,#eceef0 85%,#f8f9fa 100%);"></div><svg style="left:322.5px;top:1026px" width="13" height="15" viewBox="0 0 13 15"><path d="M1 0.5L12 7.5L1 14.5L3.5 7.5Z" fill="none" stroke="#222" stroke-width="1.4"/><path d="M2 6L3.5 9" stroke="#222" stroke-width="2"/></svg><div class="t" style="left:343px;top:1027.60px;font-size:13px;color:#000;letter-spacing:0.3px;">Watches</div><svg style="left:405px;top:1029.9px" width="8" height="8" viewBox="0 0 8 8"><path d="M1 1L7 7M7 1L1 7" stroke="#000" stroke-width="1.7"/></svg><div style="left:681px;top:1022px;width:107px;height:24px;box-sizing:border-box;border:1px solid #243448;border-top:none;border-radius:0 0 5px 5px;background:linear-gradient(to bottom,#b9cde0 0%,#a4bbd3 25%,#bfd0e1 65%,#e9eff5 100%);"></div><svg style="left:689px;top:1026px" width="16" height="16" viewBox="0 0 16 16"><path d="M1.6 4.7L3.6 5.3L6.7 3.3L8.5 0.9L8.9 2.7L12.2 5.3L14.8 6.8L12.2 8.8L11 12.3L10.5 14.1L8.9 12.7L6.3 12.7L5.3 15.3L4.2 11.3L0.4 9.8L2.6 7.6Z" fill="#2b5ba8" stroke="#4a7ac8" stroke-width="0.6" stroke-linejoin="round"/><path d="M4.5 11L8.5 7" stroke="#d8e4f4" stroke-width="0.7" stroke-dasharray="0.8 0.8"/><path d="M12 1.1L14.4 3.5L13 5.3L11 2.9Z" fill="#0a8a0a"/></svg><div class="t" style="left:710px;top:1027.60px;font-size:13px;color:#000;letter-spacing:0.3px;">Threads</div><svg style="left:769px;top:1029.9px" width="8" height="8" viewBox="0 0 8 8"><path d="M1 1L7 7M7 1L1 7" stroke="#000" stroke-width="1.7"/></svg><div style="left:788px;top:1023px;width:85px;height:23px;box-sizing:border-box;border:1px solid #243448;border-top:1px solid #0f1a28;border-radius:0 0 5px 5px;background:linear-gradient(to bottom,#d8dbe0 0%,#e0e2e6 50%,#eceef0 85%,#f8f9fa 100%);"></div><svg style="left:797px;top:1026px" width="14" height="14" viewBox="0 0 14 14"><circle cx="7" cy="7" r="6.5" fill="#fff" stroke="#c8a050" stroke-width="1.2"/><circle cx="7" cy="7" r="5" fill="#eaf2ff" stroke="#8aaee0" stroke-width="0.8"/><path d="M7 3.5V7L5 9" stroke="#555" fill="none" stroke-width="0.9"/></svg><div class="t" style="left:817px;top:1027.60px;font-size:13px;color:#000;letter-spacing:0.3px;">Time</div><svg style="left:854px;top:1029.9px" width="8" height="8" viewBox="0 0 8 8"><path d="M1 1L7 7M7 1L1 7" stroke="#000" stroke-width="1.7"/></svg><svg style="left:1709px;top:860px" width="12" height="11"><path d="M0 11V4L11 0Z" fill="#000"/></svg>
<svg style="left:3px;top:1054.5px;" width="18" height="18" viewBox="0 0 18 18"><circle cx="8.8" cy="9.2" r="7.3" fill="#fff" stroke="#333" stroke-width="0.9"/><path d="M2.8 9.9L5.3 8.6L7.6 6.1L10.3 4.4L12.6 3L14.8 4.7L16.1 8L15.9 12.2L14.8 13.8L13.7 11.1L12.6 8.6L10.9 9.9L9.5 12.2L9.2 13.8L7 14.1L8.1 12.4L8.7 10.5L6.4 11.1L3.9 11.1Z" fill="#e8261a"/></svg>
<div style="left:23px;top:1052px;width:1410px;height:25px;box-sizing:border-box;border-left:2px solid #8f939a;border-top:2px solid #8f939a;border-right:1px solid #fff;border-bottom:1px solid #fff;"></div>
<div style="left:1437px;top:1052px;width:103px;height:25px;box-sizing:border-box;border-left:2px solid #8f939a;border-top:2px solid #8f939a;border-right:1px solid #fff;border-bottom:1px solid #fff;"></div>
<div class="t" style="left:1441.5px;top:1057.80px;font-size:13px;color:#000;letter-spacing:0.6px;font-family:'Liberation Sans', sans-serif;">00400ad0</div>
<div style="left:1544px;top:1052px;width:137px;height:25px;box-sizing:border-box;border-left:2px solid #8f939a;border-top:2px solid #8f939a;border-right:1px solid #fff;border-bottom:1px solid #fff;"></div>
<div class="t" style="left:1548.5px;top:1057.80px;font-size:13px;color:#000;letter-spacing:0.6px;font-family:'Liberation Sans', sans-serif;">main</div>
<div style="left:1685px;top:1052px;width:206px;height:25px;box-sizing:border-box;border-left:2px solid #8f939a;border-top:2px solid #8f939a;border-right:1px solid #fff;border-bottom:1px solid #fff;"></div>
<div class="t" style="left:1689.5px;top:1057.80px;font-size:13px;color:#000;letter-spacing:0.6px;font-family:'Liberation Sans', sans-serif;">PUSH RBX</div>
<div style="left:1896px;top:1052px;width:22px;height:25px;box-sizing:border-box;border-left:2px solid #8f939a;border-top:2px solid #8f939a;border-right:1px solid #fff;border-bottom:1px solid #fff;"></div>
</body></html>
